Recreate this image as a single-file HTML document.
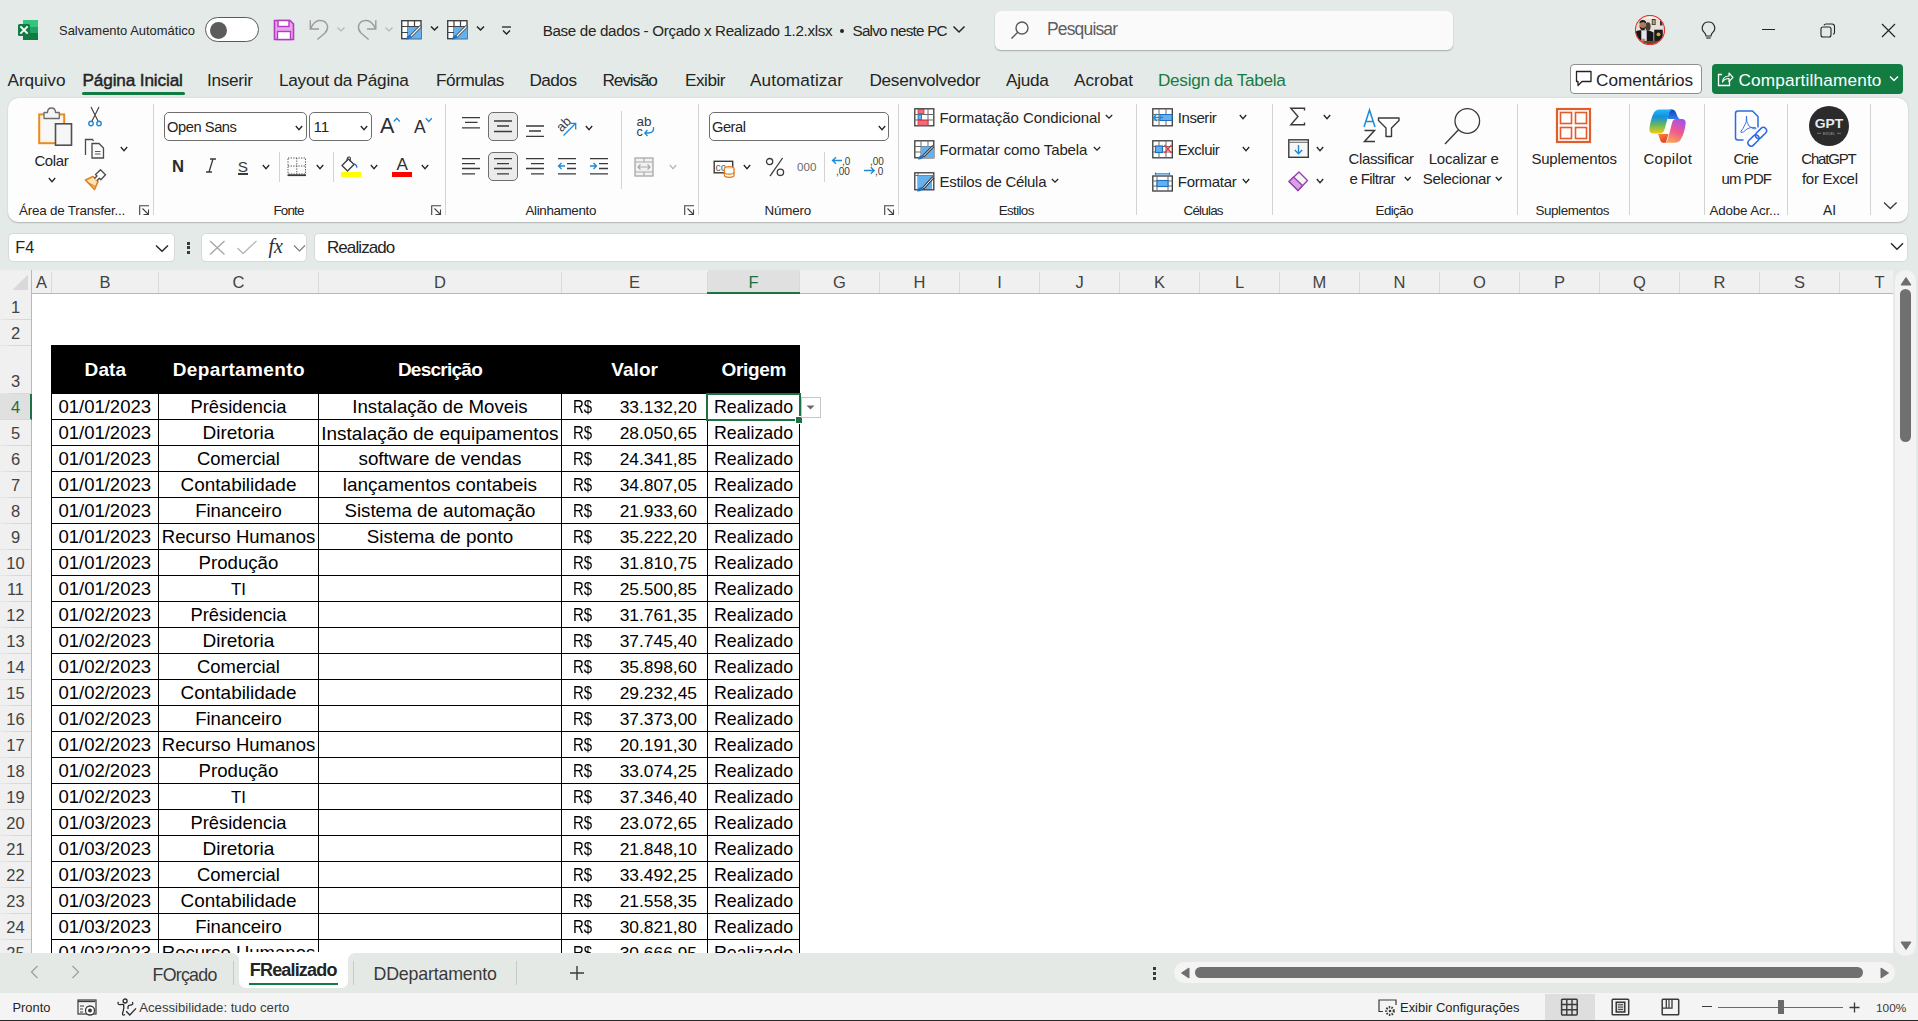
<!DOCTYPE html>
<html><head><meta charset="utf-8">
<style>
html,body{margin:0;padding:0;}
body{width:1918px;height:1021px;overflow:hidden;position:relative;background:#e3eae7;font-family:"Liberation Sans",sans-serif;}
.t{position:absolute;white-space:pre;line-height:1;}
svg{display:block;}
</style></head><body>
<svg style="position:absolute;left:17.00px;top:19.00px;" width="22" height="22" viewBox="0 0 22 22">
<rect x="6" y="1" width="15" height="20" rx="1.5" fill="#21a366"/>
<rect x="6" y="1" width="15" height="7" fill="#33c481" />
<rect x="6" y="14" width="15" height="7" fill="#107c41"/>
<rect x="6" y="8" width="15" height="6" fill="#21a366"/>
<rect x="1" y="5" width="12" height="12" rx="1.5" fill="#107c41"/>
<path d="M4 8 L10 14 M10 8 L4 14" stroke="#fff" stroke-width="1.8" stroke-linecap="square"/>
</svg>
<div class="t" style="left:59.00px;top:25.00px;font-size:12.95px;color:#242424;">Salvamento Automático</div>
<div style="position:absolute;left:205.00px;top:17.00px;width:54.00px;height:25.00px;box-sizing:border-box;border:1.3px solid #5a5a5a;border-radius:13px;background:#fff;"></div>
<div style="position:absolute;left:209.50px;top:21.50px;width:17.00px;height:17.00px;border-radius:50%;background:#5c5c5c;"></div>
<svg style="position:absolute;left:273.00px;top:19.00px;" width="22" height="22" viewBox="0 0 22 22">
<path d="M1.5 1.5 H17 L20.5 5 V20.5 H1.5 Z" fill="#e9a6ee" stroke="#b23bc0" stroke-width="1.6"/>
<rect x="5" y="1.5" width="11" height="6" fill="#fff" stroke="#b23bc0" stroke-width="1.4"/>
<rect x="4.5" y="12.5" width="13" height="8" fill="#fff" stroke="#b23bc0" stroke-width="1.4"/>
</svg>
<svg style="position:absolute;left:290.00px;top:0.00px;" width="110" height="45" viewBox="0 0 110 45"><path d="M20.3 20.3 V29 H29" fill="none" stroke="#9c9c9c" stroke-width="1.4"/><path d="M20.8 28.5 Q24 21 29 20.5 Q36 20 37.5 26 Q38 30 35 33 L27.4 39.5" fill="none" stroke="#9c9c9c" stroke-width="1.4"/><path d="M47.5 27.5 L51 31 L54.5 27.5" fill="none" stroke="#b5b5b5" stroke-width="1.1"/><path d="M85.8 20.3 V29 H77" fill="none" stroke="#9c9c9c" stroke-width="1.4"/><path d="M85.3 28.5 Q82 21 77 20.5 Q70 20 68.5 26 Q68 30 71 33 L78.6 39.5" fill="none" stroke="#9c9c9c" stroke-width="1.4"/><path d="M95.5 27.5 L99 31 L102.5 27.5" fill="none" stroke="#b5b5b5" stroke-width="1.1"/></svg>
<svg style="position:absolute;left:401.00px;top:20.00px;" width="21" height="20" viewBox="0 0 21 20">
<rect x="0.7" y="0.7" width="19.3" height="18" fill="#fff" stroke="#424242" stroke-width="1.4"/>
<path d="M0.7 6.5 H20 M0.7 12.5 H8 M7 0.7 V18.7 M13.5 0.7 V8" stroke="#424242" stroke-width="1.2"/>
<path d="M7 7 H20 V18.7 H7 Z" fill="#64b1f0"/>
<path d="M20 6 L9 17" stroke="#424242" stroke-width="3"/>
<path d="M19.5 6.5 L9.5 16.5" stroke="#fff" stroke-width="1.2"/>
<path d="M5 19.5 Q6 14.5 10 15.5 Q10 19.5 5 19.5Z" fill="#1f6fc6"/>
</svg>
<svg style="position:absolute;left:430.00px;top:25.00px;" width="9" height="7" viewBox="0 0 9 7"><path d="M1 1.5 L4.5 5 L8 1.5" fill="none" stroke="#242424" stroke-width="1.5"/></svg>
<svg style="position:absolute;left:447.00px;top:20.00px;" width="21" height="20" viewBox="0 0 21 20">
<rect x="0.7" y="0.7" width="19.3" height="18" fill="#fff" stroke="#424242" stroke-width="1.4"/>
<path d="M0.7 6.5 H20 M0.7 12.5 H8 M7 0.7 V18.7 M13.5 0.7 V8" stroke="#424242" stroke-width="1.2"/>
<path d="M7 7 H20 V18.7 H7 Z" fill="#64b1f0"/>
<path d="M20 6 L9 17" stroke="#424242" stroke-width="3"/>
<path d="M19.5 6.5 L9.5 16.5" stroke="#fff" stroke-width="1.2"/>
<path d="M5 19.5 Q6 14.5 10 15.5 Q10 19.5 5 19.5Z" fill="#1f6fc6"/>
</svg>
<svg style="position:absolute;left:476.00px;top:25.00px;" width="9" height="7" viewBox="0 0 9 7"><path d="M1 1.5 L4.5 5 L8 1.5" fill="none" stroke="#242424" stroke-width="1.5"/></svg>
<svg style="position:absolute;left:501.00px;top:26.00px;" width="11" height="10" viewBox="0 0 11 10"><path d="M1 1 H10" stroke="#242424" stroke-width="1.3"/><path d="M2 4.5 L5.5 8 L9 4.5" fill="none" stroke="#242424" stroke-width="1.4"/></svg>
<div class="t" style="left:542.70px;top:23.00px;font-size:15.20px;color:#242424;letter-spacing:-0.332px;">Base de dados - Orçado x Realizado 1.2.xlsx</div>
<div style="position:absolute;left:839.70px;top:28.60px;width:4.40px;height:4.40px;border-radius:50%;background:#242424;"></div>
<div class="t" style="left:852.50px;top:23.00px;font-size:15.20px;color:#242424;letter-spacing:-0.746px;">Salvo neste PC</div>
<svg style="position:absolute;left:952.00px;top:25.00px;" width="14" height="9" viewBox="0 0 14 9"><path d="M1.5 1.5 L7 7 L12.5 1.5" fill="none" stroke="#242424" stroke-width="1.5"/></svg>
<div style="position:absolute;left:995.00px;top:11.00px;width:458.00px;height:38.50px;box-sizing:border-box;border-radius:6px;background:#fafafa;box-shadow:0 1px 1.5px rgba(0,0,0,0.28);"></div>
<svg style="position:absolute;left:1010.00px;top:20.00px;" width="20" height="20" viewBox="0 0 20 20"><circle cx="12" cy="8" r="6" fill="none" stroke="#5a5a5a" stroke-width="1.4"/><path d="M7.8 12.2 L1.5 18.5" stroke="#5a5a5a" stroke-width="1.5"/></svg>
<div class="t" style="left:1047.00px;top:21.00px;font-size:17.50px;color:#5e5e5e;letter-spacing:-0.848px;">Pesquisar</div>
<svg style="position:absolute;left:1635.00px;top:15.00px;" width="30" height="30" viewBox="0 0 30 30">
<defs><clipPath id="av"><circle cx="15" cy="15" r="14.3"/></clipPath><filter id="avb"><feGaussianBlur stdDeviation="0.45"/></filter></defs>
<g clip-path="url(#av)"><g filter="url(#avb)">
<rect width="30" height="30" fill="#e6e1d8"/>
<rect x="0" y="0" width="30" height="4" fill="#f4f0ea"/>
<rect x="16.8" y="4" width="3.8" height="6" fill="#2f3442"/><rect x="17.6" y="5" width="2.2" height="4.2" fill="#c8a25a"/>
<rect x="25" y="5.5" width="2.5" height="5" fill="#30333a"/>
<ellipse cx="13" cy="11.5" rx="2.6" ry="4.2" fill="#4a3a32"/>
<path d="M0 17 Q2 15.5 5 15.2 H11.5 Q16 15.5 18.5 17.5 V30 H0Z" fill="#151515"/>
<rect x="6.3" y="15.3" width="5.4" height="11" fill="#e6e3ee"/>
<ellipse cx="7.8" cy="10.6" rx="3.4" ry="4.3" fill="#a97c60"/>
<path d="M4.3 8.5 Q4.5 5 7.8 5 Q11.2 5 11.3 8.5 Q9.5 7 7.8 7 Q6 7 4.3 8.5Z" fill="#1e1612"/>
<path d="M4.6 11 Q5 15.2 7.8 15.3 Q10.6 15.2 11 11 Q10 13 7.8 13 Q5.6 13 4.6 11Z" fill="#2f221c"/>
<rect x="19.2" y="14.7" width="8.6" height="11.6" fill="#1d1d1d"/>
<circle cx="23.5" cy="19.3" r="1.9" fill="#d9a83a"/>
<rect x="0" y="25.9" width="30" height="4.1" fill="#6b4a30"/>
<ellipse cx="8" cy="25" rx="2.3" ry="1.6" fill="#b68866"/>
</g></g>
<circle cx="15" cy="15" r="14.6" fill="none" stroke="#e33333" stroke-width="1.2"/>
</svg>
<svg style="position:absolute;left:1701.00px;top:21.00px;" width="15" height="19" viewBox="0 0 15 19"><path d="M7.5 1 A6 6 0 0 0 3.2 11.4 Q4.8 13 5 15 H10 Q10.2 13 11.8 11.4 A6 6 0 0 0 7.5 1Z" fill="none" stroke="#2a2a2a" stroke-width="1.2"/><path d="M5.3 17 H9.7" stroke="#2a2a2a" stroke-width="1.2"/></svg>
<div style="position:absolute;left:1761.50px;top:28.50px;width:13.00px;height:1.20px;background:#242424;"></div>
<svg style="position:absolute;left:1820.00px;top:23.00px;" width="16" height="15" viewBox="0 0 16 15"><rect x="1" y="4" width="10" height="10" rx="2" fill="none" stroke="#242424" stroke-width="1.1"/><path d="M4 2.3 Q4.5 1 6 1 H12 Q14.5 1 14.5 3.5 V9.5 Q14.5 11 13 11.3" fill="none" stroke="#242424" stroke-width="1.1"/></svg>
<svg style="position:absolute;left:1881.00px;top:23.00px;" width="15" height="15" viewBox="0 0 15 15"><path d="M1 1 L14 14 M14 1 L1 14" stroke="#242424" stroke-width="1.2"/></svg>
<div class="t" style="left:7.50px;top:72.00px;font-size:17.20px;color:#242424;letter-spacing:-0.051px;">Arquivo</div>
<div class="t" style="left:82.50px;top:72.00px;font-size:17.20px;color:#242424;letter-spacing:-0.142px;-webkit-text-stroke:0.45px #242424;">Página Inicial</div>
<div class="t" style="left:207.00px;top:72.00px;font-size:17.20px;color:#242424;letter-spacing:-0.303px;">Inserir</div>
<div class="t" style="left:279.00px;top:72.00px;font-size:17.20px;color:#242424;letter-spacing:-0.266px;">Layout da Página</div>
<div class="t" style="left:436.00px;top:72.00px;font-size:17.20px;color:#242424;letter-spacing:-0.461px;">Fórmulas</div>
<div class="t" style="left:529.50px;top:72.00px;font-size:17.20px;color:#242424;letter-spacing:-0.552px;">Dados</div>
<div class="t" style="left:602.50px;top:72.00px;font-size:17.20px;color:#242424;letter-spacing:-1.113px;">Revisão</div>
<div class="t" style="left:685.00px;top:72.00px;font-size:17.20px;color:#242424;letter-spacing:-0.500px;">Exibir</div>
<div class="t" style="left:750.00px;top:72.00px;font-size:17.20px;color:#242424;letter-spacing:0.124px;">Automatizar</div>
<div class="t" style="left:869.50px;top:72.00px;font-size:17.20px;color:#242424;letter-spacing:-0.310px;">Desenvolvedor</div>
<div class="t" style="left:1006.00px;top:72.00px;font-size:17.20px;color:#242424;letter-spacing:-0.258px;">Ajuda</div>
<div class="t" style="left:1074.00px;top:72.00px;font-size:17.20px;color:#242424;letter-spacing:-0.042px;">Acrobat</div>
<div class="t" style="left:1158.00px;top:72.00px;font-size:17.20px;color:#187a42;letter-spacing:-0.313px;">Design da Tabela</div>
<div style="position:absolute;left:82.00px;top:92.00px;width:103.00px;height:3.00px;background:#107c41;border-radius:1.5px;"></div>
<div style="position:absolute;left:1570.00px;top:64.00px;width:132.00px;height:30.00px;box-sizing:border-box;border:1px solid #8f8f8f;border-radius:4px;background:#fff;"></div>
<svg style="position:absolute;left:1575.00px;top:70.00px;" width="18" height="17" viewBox="0 0 18 17"><path d="M1.5 1.5 H16 V11.5 H7 L3 15.5 V11.5 H1.5Z" fill="none" stroke="#242424" stroke-width="1.3" stroke-linejoin="round"/></svg>
<div class="t" style="left:1596.00px;top:72.00px;font-size:17.20px;color:#242424;letter-spacing:-0.032px;">Comentários</div>
<div style="position:absolute;left:1712.00px;top:64.00px;width:191.00px;height:30.00px;border-radius:4px;background:#137c43;"></div>
<svg style="position:absolute;left:1716.00px;top:70.00px;" width="18" height="17" viewBox="0 0 18 17"><path d="M6 4.5 H2.5 V15.5 H13.5 V11" fill="none" stroke="#fff" stroke-width="1.3"/><path d="M6.5 12 Q7 6 13 6 V3 L17 7.3 L13 11.5 V8.5 Q9 8.3 6.5 12Z" fill="none" stroke="#fff" stroke-width="1.2" stroke-linejoin="round"/></svg>
<div class="t" style="left:1738.40px;top:72.00px;font-size:17.20px;color:#ffffff;letter-spacing:0.172px;">Compartilhamento</div>
<svg style="position:absolute;left:1889.00px;top:75.00px;" width="10" height="8" viewBox="0 0 10 8"><path d="M1 1.5 L5 5.5 L9 1.5" fill="none" stroke="#fff" stroke-width="1.4"/></svg>
<div style="position:absolute;left:8.00px;top:98.00px;width:1900.00px;height:123.70px;border-radius:10px;background:#fdfdfd;box-shadow:0 0.5px 1.5px rgba(0,0,0,0.22);"></div>
<svg style="position:absolute;left:30.00px;top:100.00px;" width="50" height="50" viewBox="0 0 50 50"><rect x="9.2" y="14.4" width="25" height="28.8" fill="#fff3dd" stroke="#ea8a22" stroke-width="2"/><rect x="12" y="17" width="19.5" height="23.5" fill="#f7f7f7"/><path d="M14 18.5 V12.5 H17.5 Q17.5 8 21.5 8 Q25.5 8 25.5 12.5 H29.3 V18.5Z" fill="#f4f4f4" stroke="#6b6b6b" stroke-width="1.3" stroke-linejoin="round"/><rect x="25.5" y="23.8" width="16" height="21.4" fill="#f6f6f6" stroke="#505050" stroke-width="1.6"/></svg>
<div class="t" style="left:34.40px;top:153.00px;font-size:15.00px;color:#242424;letter-spacing:-0.387px;">Colar</div>
<svg style="position:absolute;left:47.50px;top:176.50px;" width="8" height="6.5" viewBox="0 0 8 6.5"><path d="M0.8 1 L4.00 4.70 L7.20 1" fill="none" stroke="#242424" stroke-width="1.30"/></svg>
<svg style="position:absolute;left:87.00px;top:106.00px;" width="16" height="22" viewBox="0 0 16 22"><path d="M4 1 L11 15 M12 1 L5 15" stroke="#3c3c3c" stroke-width="1.1"/><circle cx="4" cy="17.5" r="2.2" fill="none" stroke="#1e8ad6" stroke-width="1.4"/><circle cx="12" cy="17.5" r="2.2" fill="none" stroke="#1e8ad6" stroke-width="1.4"/></svg>
<svg style="position:absolute;left:84.00px;top:138.00px;" width="22" height="22" viewBox="0 0 22 22"><path d="M1.5 17 V1.5 H8.5 L9.5 3" fill="none" stroke="#4a4a4a" stroke-width="1.3"/><path d="M8 5.5 H15 L19.5 10 V20 H8Z" fill="#fafafa" stroke="#4a4a4a" stroke-width="1.3"/><path d="M11 13.5 H16.5 M11 16 H16.5" stroke="#5a5a5a" stroke-width="1"/></svg>
<svg style="position:absolute;left:119.50px;top:146.00px;" width="8" height="6.5" viewBox="0 0 8 6.5"><path d="M0.8 1 L4.00 4.70 L7.20 1" fill="none" stroke="#242424" stroke-width="1.30"/></svg>
<svg style="position:absolute;left:84.00px;top:169.00px;" width="23" height="22" viewBox="0 0 23 22"><path d="M1.5 11 L9 7.5 L14 12.5 L10.5 20.5 Z" fill="#fde3b0" stroke="#e3811c" stroke-width="1.7" stroke-linejoin="round"/><path d="M4.5 14 L11 17.5" stroke="#e3811c" stroke-width="1.2"/><path d="M10.5 9.5 L13 7 L11.5 5.5 L16.5 0.8 L21.5 5.8 L16.8 10.8 L15.3 9.3 L12.8 11.8" fill="#fff" stroke="#4a4a4a" stroke-width="1.3" stroke-linejoin="round"/></svg>
<div class="t" style="left:19.00px;top:204.00px;font-size:13.40px;color:#242424;letter-spacing:-0.212px;">Área de Transfer...</div>
<svg style="position:absolute;left:138.50px;top:204.50px;" width="11" height="11" viewBox="0 0 11 11"><path d="M0.7 10 V0.7 H10" fill="none" stroke="#424242" stroke-width="1.1"/><path d="M3.5 3.5 L9.5 9.5 M9.5 4.5 V9.5 H4.5" fill="none" stroke="#424242" stroke-width="1.1"/></svg>
<div style="position:absolute;left:153.10px;top:104.00px;width:1.00px;height:111.00px;background:#d3d3d3;"></div>
<div style="position:absolute;left:164.30px;top:112.20px;width:142.30px;height:29.30px;box-sizing:border-box;border:1px solid #6e6e6e;border-radius:5px;background:#fff;"></div>
<div class="t" style="left:167.00px;top:120.00px;font-size:14.70px;color:#242424;letter-spacing:-0.447px;">Open Sans</div>
<svg style="position:absolute;left:295.20px;top:124.50px;" width="8" height="6.5" viewBox="0 0 8 6.5"><path d="M0.8 1 L4.00 4.70 L7.20 1" fill="none" stroke="#242424" stroke-width="1.30"/></svg>
<div style="position:absolute;left:309.20px;top:112.20px;width:62.70px;height:29.30px;box-sizing:border-box;border:1px solid #6e6e6e;border-radius:5px;background:#fff;"></div>
<div class="t" style="left:313.40px;top:119.00px;font-size:15.20px;color:#242424;">11</div>
<svg style="position:absolute;left:360.30px;top:124.50px;" width="8" height="6.5" viewBox="0 0 8 6.5"><path d="M0.8 1 L4.00 4.70 L7.20 1" fill="none" stroke="#242424" stroke-width="1.30"/></svg>
<div class="t" style="left:380.00px;top:116.00px;font-size:21.50px;color:#2e2e2e;">A</div>
<svg style="position:absolute;left:393.00px;top:117.00px;" width="8" height="6" viewBox="0 0 8 6"><path d="M0.8 4.5 L3.8 1.3 L6.8 4.5" fill="none" stroke="#1e8ad6" stroke-width="1.3"/></svg>
<div class="t" style="left:414.00px;top:119.00px;font-size:17.50px;color:#2e2e2e;">A</div>
<svg style="position:absolute;left:424.50px;top:117.00px;" width="8" height="6" viewBox="0 0 8 6"><path d="M0.8 1.3 L3.8 4.5 L6.8 1.3" fill="none" stroke="#1e8ad6" stroke-width="1.3"/></svg>
<div class="t" style="left:172.00px;top:159.00px;font-size:16.67px;color:#2a2a2a;font-weight:bold;">N</div>
<svg style="position:absolute;left:205.00px;top:158.00px;" width="12" height="15" viewBox="0 0 12 15"><path d="M5 1 H11 M1 14 H7 M8 1 L4 14" fill="none" stroke="#3a3a3a" stroke-width="1.3"/></svg>
<div class="t" style="left:237.80px;top:159.00px;font-size:15.34px;color:#3a3a3a;">S</div>
<div style="position:absolute;left:237.50px;top:173.30px;width:10.50px;height:1.40px;background:#3a3a3a;"></div>
<svg style="position:absolute;left:262.10px;top:164.00px;" width="8" height="6.5" viewBox="0 0 8 6.5"><path d="M0.8 1 L4.00 4.70 L7.20 1" fill="none" stroke="#242424" stroke-width="1.30"/></svg>
<div style="position:absolute;left:279.00px;top:152.00px;width:1.00px;height:29.50px;background:#d3d3d3;"></div>
<svg style="position:absolute;left:286.50px;top:156.50px;" width="20" height="20" viewBox="0 0 20 20"><path d="M1 1 H18.5 V17 H1Z M9.75 1 V17 M1 9 H18.5" fill="none" stroke="#555" stroke-width="1" stroke-dasharray="1.3 1.3"/><path d="M0.5 18.2 H19" stroke="#3a3a3a" stroke-width="1.8"/></svg>
<svg style="position:absolute;left:316.00px;top:164.00px;" width="8" height="6.5" viewBox="0 0 8 6.5"><path d="M0.8 1 L4.00 4.70 L7.20 1" fill="none" stroke="#242424" stroke-width="1.30"/></svg>
<div style="position:absolute;left:332.90px;top:152.00px;width:1.00px;height:29.50px;background:#d3d3d3;"></div>
<svg style="position:absolute;left:340.00px;top:156.00px;" width="22" height="22" viewBox="0 0 22 22"><path d="M2 9.5 L8.5 3 L14 8.5 L7.5 15Z" fill="#fff" stroke="#3a3a3a" stroke-width="1.3" stroke-linejoin="round"/><path d="M7 4.5 Q7 0.5 9.5 1 Q11 1.5 10 5.5" fill="none" stroke="#3a3a3a" stroke-width="1.1"/><path d="M13.5 7.5 Q17 7 17.5 11.5 L16.5 12 Q16 9 14.5 9Z" fill="#1e6fbf"/><rect x="1" y="16" width="20" height="5" fill="#ffff00"/></svg>
<svg style="position:absolute;left:370.10px;top:164.00px;" width="8" height="6.5" viewBox="0 0 8 6.5"><path d="M0.8 1 L4.00 4.70 L7.20 1" fill="none" stroke="#242424" stroke-width="1.30"/></svg>
<div class="t" style="left:396.50px;top:156.00px;font-size:17.16px;color:#2e2e2e;">A</div>
<div style="position:absolute;left:392.00px;top:172.00px;width:20.00px;height:5.00px;background:#ff0000;"></div>
<svg style="position:absolute;left:421.00px;top:164.00px;" width="8" height="6.5" viewBox="0 0 8 6.5"><path d="M0.8 1 L4.00 4.70 L7.20 1" fill="none" stroke="#242424" stroke-width="1.30"/></svg>
<svg style="position:absolute;left:430.50px;top:204.50px;" width="11" height="11" viewBox="0 0 11 11"><path d="M0.7 10 V0.7 H10" fill="none" stroke="#424242" stroke-width="1.1"/><path d="M3.5 3.5 L9.5 9.5 M9.5 4.5 V9.5 H4.5" fill="none" stroke="#424242" stroke-width="1.1"/></svg>
<div class="t" style="left:273.50px;top:204.00px;font-size:13.40px;color:#242424;letter-spacing:-0.834px;">Fonte</div>
<div style="position:absolute;left:444.90px;top:104.00px;width:1.00px;height:111.00px;background:#d3d3d3;"></div>
<svg style="position:absolute;left:461.00px;top:110.00px;" width="22" height="70" viewBox="0 0 22 70"><path d="M1 7.6 H19 M4 12.4 H16.5 M1 17.8 H19" stroke="#3a3a3a" stroke-width="1.3"/></svg>
<div style="position:absolute;left:488.00px;top:112.20px;width:29.50px;height:29.30px;box-sizing:border-box;border:1px solid #6e6e6e;border-radius:5px;background:#ebebeb;"></div>
<svg style="position:absolute;left:493.00px;top:110.00px;" width="22" height="70" viewBox="0 0 22 70"><path d="M1 11 H19 M4 16 H16 M1 21.5 H19" stroke="#3a3a3a" stroke-width="1.3"/></svg>
<svg style="position:absolute;left:525.00px;top:110.00px;" width="22" height="70" viewBox="0 0 22 70"><path d="M1 16 H19 M4 21 H16 M1 26.4 H19" stroke="#3a3a3a" stroke-width="1.3"/></svg>
<svg style="position:absolute;left:556.00px;top:116.00px;" width="22" height="22" viewBox="0 0 22 22"><text x="0" y="0" transform="translate(5.6,16.4) rotate(-45)" font-family="Liberation Sans" font-size="13.2" fill="#3a3a3a">ab</text><path d="M7.5 19.5 L19.5 7.5 M13.5 7.3 H19.7 V13.5" fill="none" stroke="#1e8ad6" stroke-width="1.3"/></svg>
<svg style="position:absolute;left:584.50px;top:124.50px;" width="8" height="6.5" viewBox="0 0 8 6.5"><path d="M0.8 1 L4.00 4.70 L7.20 1" fill="none" stroke="#242424" stroke-width="1.30"/></svg>
<svg style="position:absolute;left:461.00px;top:110.00px;" width="22" height="70" viewBox="0 0 22 70"><path d="M1 48.6 H19 M1 53.7 H14 M1 58.5 H19 M1 63.9 H14" stroke="#3a3a3a" stroke-width="1.3"/></svg>
<div style="position:absolute;left:488.00px;top:152.30px;width:29.50px;height:29.20px;box-sizing:border-box;border:1px solid #6e6e6e;border-radius:5px;background:#ebebeb;"></div>
<svg style="position:absolute;left:493.00px;top:110.00px;" width="22" height="70" viewBox="0 0 22 70"><path d="M1 48.6 H19 M4 53.7 H16 M1 58.5 H19 M4 63.9 H16" stroke="#3a3a3a" stroke-width="1.3"/></svg>
<svg style="position:absolute;left:525.00px;top:110.00px;" width="22" height="70" viewBox="0 0 22 70"><path d="M1 48.6 H19 M6 53.7 H19 M1 58.5 H19 M6 63.9 H19" stroke="#3a3a3a" stroke-width="1.3"/></svg>
<svg style="position:absolute;left:557.00px;top:110.00px;" width="22" height="70" viewBox="0 0 22 70"><path d="M1 48.6 H19 M10 53.7 H19 M10 58.5 H19 M1 63.9 H19" stroke="#3a3a3a" stroke-width="1.3"/><path d="M8 56 H1.8 M4.5 53 L1.5 56 L4.5 59" fill="none" stroke="#1e8ad6" stroke-width="1.3"/></svg>
<svg style="position:absolute;left:589.00px;top:110.00px;" width="22" height="70" viewBox="0 0 22 70"><path d="M1 48.6 H19 M10 53.7 H19 M10 58.5 H19 M1 63.9 H19" stroke="#3a3a3a" stroke-width="1.3"/><path d="M1 56 H7.5 M4.5 53 L7.5 56 L4.5 59" fill="none" stroke="#1e8ad6" stroke-width="1.3"/></svg>
<div style="position:absolute;left:621.10px;top:111.00px;width:1.00px;height:78.00px;background:#d3d3d3;"></div>
<svg style="position:absolute;left:636.00px;top:116.00px;" width="20" height="22" viewBox="0 0 20 22"><text x="0.6" y="10.3" font-family="Liberation Sans" font-size="12.6" fill="#3a3a3a" textLength="15" lengthAdjust="spacingAndGlyphs">ab</text><text x="0.6" y="19.6" font-family="Liberation Sans" font-size="12.6" fill="#3a3a3a">c</text><path d="M17.5 11 Q18.5 17 12 17 H9 M11.5 14 L8.8 17 L11.5 20" fill="none" stroke="#1e8ad6" stroke-width="1.3"/></svg>
<svg style="position:absolute;left:633.50px;top:156.50px;" width="20" height="20" viewBox="0 0 20 20"><rect x="1" y="1" width="18" height="18" fill="#f2f2f2" stroke="#a8a8a8" stroke-width="1.3"/><path d="M1 5 H19 M1 15 H19 M10 1 V5 M10 15 V19" stroke="#a8a8a8" stroke-width="1.1"/><path d="M4 10 H16 M6.5 7.5 L4 10 L6.5 12.5 M13.5 7.5 L16 10 L13.5 12.5" fill="none" stroke="#a8a8a8" stroke-width="1.1"/></svg>
<svg style="position:absolute;left:669.30px;top:164.00px;" width="8" height="6.5" viewBox="0 0 8 6.5"><path d="M0.8 1 L4.00 4.70 L7.20 1" fill="none" stroke="#b8b8b8" stroke-width="1.30"/></svg>
<svg style="position:absolute;left:683.50px;top:204.50px;" width="11" height="11" viewBox="0 0 11 11"><path d="M0.7 10 V0.7 H10" fill="none" stroke="#424242" stroke-width="1.1"/><path d="M3.5 3.5 L9.5 9.5 M9.5 4.5 V9.5 H4.5" fill="none" stroke="#424242" stroke-width="1.1"/></svg>
<div class="t" style="left:525.50px;top:204.00px;font-size:13.40px;color:#242424;letter-spacing:-0.360px;">Alinhamento</div>
<div style="position:absolute;left:697.90px;top:104.00px;width:1.00px;height:111.00px;background:#d3d3d3;"></div>
<div style="position:absolute;left:709.20px;top:112.20px;width:179.50px;height:29.30px;box-sizing:border-box;border:1px solid #6e6e6e;border-radius:5px;background:#fff;"></div>
<div class="t" style="left:712.00px;top:120.00px;font-size:14.70px;color:#242424;letter-spacing:-0.485px;">Geral</div>
<svg style="position:absolute;left:877.50px;top:124.50px;" width="8" height="6.5" viewBox="0 0 8 6.5"><path d="M0.8 1 L4.00 4.70 L7.20 1" fill="none" stroke="#242424" stroke-width="1.30"/></svg>
<svg style="position:absolute;left:713.00px;top:159.50px;" width="23" height="19" viewBox="0 0 23 19"><rect x="1.2" y="1.3" width="18.5" height="11.5" fill="#fff" stroke="#3a3a3a" stroke-width="1.4"/><text x="2.6" y="10.8" font-family="Liberation Sans" font-size="10.5" fill="#5a5a5a">cc</text><ellipse cx="16.2" cy="8.8" rx="4.8" ry="2.1" fill="#fde3c2" stroke="#e07a1a" stroke-width="1.3"/><path d="M11.4 8.8 V15.2 A4.8 2.1 0 0 0 21 15.2 V8.8" fill="#fff" stroke="#e07a1a" stroke-width="1.3"/><path d="M11.4 12 A4.8 2.1 0 0 0 21 12" fill="none" stroke="#e07a1a" stroke-width="1.2"/></svg>
<svg style="position:absolute;left:743.30px;top:164.00px;" width="8" height="6.5" viewBox="0 0 8 6.5"><path d="M0.8 1 L4.00 4.70 L7.20 1" fill="none" stroke="#242424" stroke-width="1.30"/></svg>
<svg style="position:absolute;left:765.00px;top:157.00px;" width="21" height="21" viewBox="0 0 21 21"><circle cx="4.6" cy="4.6" r="3.1" fill="none" stroke="#3a3a3a" stroke-width="1.3"/><circle cx="15.4" cy="15.3" r="3.2" fill="none" stroke="#3a3a3a" stroke-width="1.3"/><path d="M17.6 1 L5 19.2" stroke="#3a3a3a" stroke-width="1.3"/></svg>
<div class="t" style="left:797.00px;top:161.00px;font-size:11.62px;color:#6a6a6a;">000</div>
<div style="position:absolute;left:824.00px;top:152.00px;width:1.00px;height:29.50px;background:#d3d3d3;"></div>
<svg style="position:absolute;left:831.00px;top:156.00px;" width="22" height="22" viewBox="0 0 22 22"><text x="11" y="8.8" font-family="Liberation Sans" font-size="10" fill="#3a3a3a">,0</text><text x="5" y="19" font-family="Liberation Sans" font-size="10" fill="#3a3a3a">,00</text><path d="M11 4.5 H1.8 M5 1.3 L1.5 4.5 L5 7.7" fill="none" stroke="#1e8ad6" stroke-width="1.3"/></svg>
<svg style="position:absolute;left:863.00px;top:156.00px;" width="22" height="22" viewBox="0 0 22 22"><text x="7" y="8.8" font-family="Liberation Sans" font-size="10" fill="#3a3a3a">,00</text><text x="12" y="19" font-family="Liberation Sans" font-size="10" fill="#3a3a3a">,0</text><path d="M1 14.5 H11 M7.8 11.3 L11.2 14.5 L7.8 17.7" fill="none" stroke="#1e8ad6" stroke-width="1.3"/></svg>
<div class="t" style="left:764.60px;top:204.00px;font-size:13.40px;color:#242424;letter-spacing:-0.187px;">Número</div>
<svg style="position:absolute;left:883.50px;top:204.50px;" width="11" height="11" viewBox="0 0 11 11"><path d="M0.7 10 V0.7 H10" fill="none" stroke="#424242" stroke-width="1.1"/><path d="M3.5 3.5 L9.5 9.5 M9.5 4.5 V9.5 H4.5" fill="none" stroke="#424242" stroke-width="1.1"/></svg>
<div style="position:absolute;left:898.00px;top:104.00px;width:1.00px;height:111.00px;background:#d3d3d3;"></div>
<svg style="position:absolute;left:913.50px;top:107.50px;" width="21" height="19" viewBox="0 0 21 19"><rect x="0.8" y="0.8" width="19" height="17" fill="#fff" stroke="#3a3a3a" stroke-width="1.3"/><path d="M0.8 6.5 H20 M0.8 12 H20 M7 0.8 V18 M14 0.8 V18" stroke="#6a6a6a" stroke-width="1"/><rect x="4" y="1.5" width="6" height="4" fill="#f26b7a" stroke="#d92d3b" stroke-width="0.8"/><rect x="4" y="6.8" width="3.5" height="4.8" fill="#64b1f0" stroke="#1e6fbf" stroke-width="0.8"/><rect x="4" y="12.3" width="10" height="5" fill="#f26b7a" stroke="#d92d3b" stroke-width="0.8"/></svg>
<div class="t" style="left:939.50px;top:110.00px;font-size:15.00px;color:#242424;letter-spacing:-0.071px;">Formatação Condicional</div>
<svg style="position:absolute;left:1105.20px;top:113.70px;" width="8" height="6" viewBox="0 0 8 6"><path d="M0.8 1 L4.00 4.20 L7.20 1" fill="none" stroke="#242424" stroke-width="1.30"/></svg>
<svg style="position:absolute;left:913.50px;top:139.50px;" width="21" height="20" viewBox="0 0 21 20"><rect x="0.8" y="0.8" width="19" height="17" fill="#fff" stroke="#3a3a3a" stroke-width="1.3"/><path d="M0.8 6.5 H20 M7 0.8 V18 M14 0.8 V6.5 M0.8 12 H7" stroke="#6a6a6a" stroke-width="1"/><path d="M7 6.5 H20 V18 H7Z" fill="#64b1f0"/><path d="M19.5 6 L9 16.5" stroke="#3a3a3a" stroke-width="2.8"/><path d="M19 6.5 L9.5 16" stroke="#fff" stroke-width="1"/><path d="M4 19.5 Q5 14.5 9.5 15.3 Q9.5 19.5 4 19.5Z" fill="#1e6fbf"/></svg>
<div class="t" style="left:939.50px;top:142.00px;font-size:15.00px;color:#242424;letter-spacing:-0.097px;">Formatar como Tabela</div>
<svg style="position:absolute;left:1092.50px;top:145.80px;" width="8" height="6" viewBox="0 0 8 6"><path d="M0.8 1 L4.00 4.20 L7.20 1" fill="none" stroke="#242424" stroke-width="1.30"/></svg>
<svg style="position:absolute;left:913.50px;top:171.50px;" width="21" height="20" viewBox="0 0 21 20"><rect x="0.8" y="0.8" width="19" height="17" fill="#fff" stroke="#3a3a3a" stroke-width="1.3"/><path d="M0.8 3.5 H20 M4 0.8 V18" stroke="#6a6a6a" stroke-width="1"/><path d="M4 3.5 H18 V17 H4Z" fill="#64b1f0"/><path d="M19.5 5 L9 16.5" stroke="#3a3a3a" stroke-width="2.8"/><path d="M19 5.5 L9.5 16" stroke="#fff" stroke-width="1"/><path d="M3 19.5 Q4 14.5 9 15.3 Q9 19.5 3 19.5Z" fill="#1e6fbf"/></svg>
<div class="t" style="left:939.50px;top:174.00px;font-size:15.00px;color:#242424;letter-spacing:-0.297px;">Estilos de Célula</div>
<svg style="position:absolute;left:1051.10px;top:178.00px;" width="8" height="6" viewBox="0 0 8 6"><path d="M0.8 1 L4.00 4.20 L7.20 1" fill="none" stroke="#242424" stroke-width="1.30"/></svg>
<div class="t" style="left:998.70px;top:204.00px;font-size:13.40px;color:#242424;letter-spacing:-0.627px;">Estilos</div>
<div style="position:absolute;left:1136.20px;top:104.00px;width:1.00px;height:111.00px;background:#d3d3d3;"></div>
<svg style="position:absolute;left:1151.50px;top:107.50px;" width="21" height="19" viewBox="0 0 21 19"><rect x="0.8" y="0.8" width="19.5" height="17" fill="#fff" stroke="#3a3a3a" stroke-width="1.3"/><path d="M0.8 6.5 H20 M0.8 12 H20 M7 0.8 V18 M14 0.8 V18" stroke="#6a6a6a" stroke-width="1"/><rect x="8" y="6.5" width="12" height="6" fill="#64b1f0" stroke="#1e6fbf" stroke-width="1"/><path d="M11 9.5 H1.5 M5 6 L1.5 9.5 L5 13" fill="none" stroke="#1e8ad6" stroke-width="1.4"/></svg>
<div class="t" style="left:1177.80px;top:110.00px;font-size:15.00px;color:#242424;letter-spacing:-0.450px;">Inserir</div>
<svg style="position:absolute;left:1239.30px;top:114.00px;" width="8" height="6.5" viewBox="0 0 8 6.5"><path d="M0.8 1 L4.00 4.70 L7.20 1" fill="none" stroke="#242424" stroke-width="1.30"/></svg>
<svg style="position:absolute;left:1151.50px;top:139.50px;" width="21" height="20" viewBox="0 0 21 20"><rect x="0.8" y="0.8" width="19.5" height="17" fill="#fff" stroke="#3a3a3a" stroke-width="1.3"/><path d="M0.8 6.5 H20 M0.8 12 H20 M7 0.8 V18 M14 0.8 V18" stroke="#6a6a6a" stroke-width="1"/><rect x="3.5" y="6" width="7" height="6.5" fill="#64b1f0" stroke="#1e6fbf" stroke-width="1.2"/><path d="M12.5 5 L19.5 13 M19.5 5 L12.5 13" stroke="#e8383d" stroke-width="1.4" /><rect x="12" y="4.5" width="0" height="0"/></svg>
<div class="t" style="left:1177.80px;top:142.00px;font-size:15.00px;color:#242424;letter-spacing:-0.500px;">Excluir</div>
<svg style="position:absolute;left:1242.20px;top:146.00px;" width="8" height="6.5" viewBox="0 0 8 6.5"><path d="M0.8 1 L4.00 4.70 L7.20 1" fill="none" stroke="#242424" stroke-width="1.30"/></svg>
<svg style="position:absolute;left:1151.50px;top:170.50px;" width="21" height="21" viewBox="0 0 21 21"><path d="M3.5 1.5 V4 M17.5 1.5 V4 M3.5 2.8 H17.5" stroke="#1e8ad6" stroke-width="1.2"/><rect x="0.8" y="5" width="19.5" height="15" fill="#fff" stroke="#3a3a3a" stroke-width="1.3"/><path d="M0.8 10 H20 M0.8 15 H20 M5 5 V20 M16 5 V20" stroke="#6a6a6a" stroke-width="1"/><rect x="5" y="9.5" width="11" height="6" fill="#64b1f0" stroke="#1e6fbf" stroke-width="1.1"/></svg>
<div class="t" style="left:1177.80px;top:174.00px;font-size:15.00px;color:#242424;letter-spacing:-0.275px;">Formatar</div>
<svg style="position:absolute;left:1241.50px;top:177.50px;" width="8" height="6.5" viewBox="0 0 8 6.5"><path d="M0.8 1 L4.00 4.70 L7.20 1" fill="none" stroke="#242424" stroke-width="1.30"/></svg>
<div class="t" style="left:1183.50px;top:204.00px;font-size:13.40px;color:#242424;letter-spacing:-0.765px;">Células</div>
<div style="position:absolute;left:1272.10px;top:104.00px;width:1.00px;height:111.00px;background:#d3d3d3;"></div>
<svg style="position:absolute;left:1289.00px;top:107.00px;" width="18" height="20" viewBox="0 0 18 20"><path d="M15.5 3.5 V1.3 H1.8 L9 9.5 L1.8 17.8 H15.5 V15.5" fill="none" stroke="#3a3a3a" stroke-width="1.4" stroke-linejoin="miter"/></svg>
<svg style="position:absolute;left:1323.30px;top:114.00px;" width="8" height="6.5" viewBox="0 0 8 6.5"><path d="M0.8 1 L4.00 4.70 L7.20 1" fill="none" stroke="#242424" stroke-width="1.30"/></svg>
<svg style="position:absolute;left:1287.50px;top:139.00px;" width="21" height="20" viewBox="0 0 21 20"><rect x="0.8" y="0.8" width="19.5" height="17.5" fill="#f6f6f6" stroke="#3a3a3a" stroke-width="1.4"/><path d="M0.8 3.3 H20" stroke="#6a6a6a" stroke-width="1"/><path d="M10.5 6 V14.5 M6.8 11 L10.5 14.8 L14.2 11" fill="none" stroke="#1e8ad6" stroke-width="1.4"/></svg>
<svg style="position:absolute;left:1315.50px;top:146.00px;" width="8" height="6.5" viewBox="0 0 8 6.5"><path d="M0.8 1 L4.00 4.70 L7.20 1" fill="none" stroke="#242424" stroke-width="1.30"/></svg>
<svg style="position:absolute;left:1287.50px;top:170.50px;" width="21" height="21" viewBox="0 0 21 21"><path d="M1 10.5 L11 1 L19.5 9.5 L10 19.5Z" fill="#f4f4f4" stroke="#9a3cb8" stroke-width="1.4" stroke-linejoin="round"/><path d="M1 10.5 L5.5 6 L14.5 14.5 L10 19.5Z" fill="#d8a2e0" stroke="#9a3cb8" stroke-width="1.3" stroke-linejoin="round"/></svg>
<svg style="position:absolute;left:1315.50px;top:177.50px;" width="8" height="6.5" viewBox="0 0 8 6.5"><path d="M0.8 1 L4.00 4.70 L7.20 1" fill="none" stroke="#242424" stroke-width="1.30"/></svg>
<svg style="position:absolute;left:1360.00px;top:106.00px;" width="42" height="40" viewBox="0 0 42 40"><path d="M4 21 L9.5 4 L15 21 M5.8 15.5 H13.2" fill="none" stroke="#1e8ad6" stroke-width="1.5"/><path d="M4.5 24.5 H14.5 L4.5 35.5 H15" fill="none" stroke="#3a3a3a" stroke-width="1.5"/><path d="M18.5 12 H39 V14.5 L31.5 22 V30.5 H26 V22 L18.5 14.5Z" fill="#fff" stroke="#3a3a3a" stroke-width="1.4" stroke-linejoin="round"/></svg>
<div class="t" style="left:1348.50px;top:151.00px;font-size:15.00px;color:#242424;letter-spacing:-0.365px;">Classificar</div>
<div class="t" style="left:1349.40px;top:171.00px;font-size:15.00px;color:#242424;letter-spacing:-0.581px;">e Filtrar</div>
<svg style="position:absolute;left:1404.00px;top:175.50px;" width="7.5" height="6" viewBox="0 0 7.5 6"><path d="M0.8 1 L3.75 4.20 L6.70 1" fill="none" stroke="#242424" stroke-width="1.30"/></svg>
<svg style="position:absolute;left:1443.00px;top:106.00px;" width="40" height="40" viewBox="0 0 40 40"><circle cx="24.3" cy="15" r="12.3" fill="none" stroke="#3a3a3a" stroke-width="1.3"/><path d="M15.5 23.8 L2 38" stroke="#3a3a3a" stroke-width="1.4"/></svg>
<div class="t" style="left:1428.70px;top:151.00px;font-size:15.00px;color:#242424;letter-spacing:-0.243px;">Localizar e</div>
<div class="t" style="left:1422.70px;top:171.00px;font-size:15.00px;color:#242424;letter-spacing:-0.286px;">Selecionar</div>
<svg style="position:absolute;left:1495.10px;top:175.50px;" width="7.5" height="6" viewBox="0 0 7.5 6"><path d="M0.8 1 L3.75 4.20 L6.70 1" fill="none" stroke="#242424" stroke-width="1.30"/></svg>
<div class="t" style="left:1375.60px;top:204.00px;font-size:13.40px;color:#242424;letter-spacing:-0.641px;">Edição</div>
<div style="position:absolute;left:1517.00px;top:104.00px;width:1.00px;height:111.00px;background:#d3d3d3;"></div>
<svg style="position:absolute;left:1555.00px;top:107.00px;" width="38" height="38" viewBox="0 0 38 38"><rect x="2" y="2" width="33" height="33" fill="none" stroke="#e35d2a" stroke-width="2.2"/><rect x="5.5" y="5.5" width="11" height="11" fill="none" stroke="#e35d2a" stroke-width="1.6"/><rect x="20.5" y="5.5" width="11" height="11" fill="none" stroke="#e35d2a" stroke-width="1.6"/><rect x="5.5" y="20.5" width="11" height="11" fill="none" stroke="#e35d2a" stroke-width="1.6"/><rect x="20.5" y="20.5" width="11" height="11" fill="none" stroke="#e35d2a" stroke-width="1.6"/></svg>
<div class="t" style="left:1531.40px;top:151.00px;font-size:15.00px;color:#242424;letter-spacing:-0.193px;">Suplementos</div>
<div class="t" style="left:1535.50px;top:204.00px;font-size:13.40px;color:#242424;letter-spacing:-0.409px;">Suplementos</div>
<div style="position:absolute;left:1629.00px;top:104.00px;width:1.00px;height:111.00px;background:#d3d3d3;"></div>
<svg style="position:absolute;left:1647.50px;top:107.50px;" width="39" height="37" viewBox="0 0 39 37">
<defs>
<linearGradient id="cp1" x1="0" y1="0" x2="0" y2="1"><stop offset="0" stop-color="#28b4f8"/><stop offset="0.3" stop-color="#1090e0"/><stop offset="0.65" stop-color="#6ab85a"/><stop offset="1" stop-color="#f5cc10"/></linearGradient>
<linearGradient id="cp2" x1="0.7" y1="0" x2="0.3" y2="1"><stop offset="0" stop-color="#a650ea"/><stop offset="0.5" stop-color="#f05a8c"/><stop offset="1" stop-color="#fba65a"/></linearGradient>
<linearGradient id="cp3" x1="0" y1="0" x2="0" y2="1"><stop offset="0" stop-color="#0c3fc8"/><stop offset="1" stop-color="#2f80e8"/></linearGradient>
<linearGradient id="cp4" x1="0" y1="0" x2="0.5" y2="1"><stop offset="0" stop-color="#ff8a3a"/><stop offset="1" stop-color="#e0402a"/></linearGradient>
</defs>
<path d="M21.5 1.5 H24 Q27 1.5 28.3 5.5 Q29.3 9 31.5 11 H19.5 Z" fill="url(#cp3)"/>
<path d="M4.8 25.5 Q1.2 25 1.4 21 Q2.5 12 5 6.5 Q7 1.5 11.5 1.5 H24.5 Q22 2 20.5 7 L16.5 21.5 Q15.3 25.5 12 25.5 Z" fill="url(#cp1)"/>
<path d="M9.8 26 H20.5 L17.8 34.8 H15 Q12.5 34.5 11.5 30 Q11 27 9.8 26 Z" fill="url(#cp4)"/>
<path d="M27.5 11 H34.5 Q38.2 11.3 37.6 16 Q36.5 25 33 31 Q31 34.8 27 34.8 H16.5 Q18.8 34.5 20 30.5 L24 15 Q25 11 27.5 11 Z" fill="url(#cp2)"/>
</svg>
<div class="t" style="left:1643.50px;top:151.00px;font-size:15.00px;color:#242424;letter-spacing:0.279px;">Copilot</div>
<div style="position:absolute;left:1704.10px;top:104.00px;width:1.00px;height:111.00px;background:#d3d3d3;"></div>
<svg style="position:absolute;left:1734.00px;top:110.00px;" width="34" height="37" viewBox="0 0 34 37"><path d="M9.5 30 H4 Q1.5 30 1.5 27.5 V3.5 Q1.5 1 4 1 H18.5 L24 6.5 V17.5" fill="none" stroke="#2d6ae0" stroke-width="1.5" stroke-linejoin="round"/><path d="M12.5 6 Q13.5 12 9 18.5 Q6 22 7 22.5 Q9 23 13 19 Q17 16.5 21 17.5 Q23 18 21.5 19 Q19 19.5 15 16 Q12 12.5 12.5 6Z" fill="none" stroke="#2d6ae0" stroke-width="0.9" stroke-linejoin="round"/><g transform="rotate(-45 19.5 30.5)"><rect x="13" y="27.3" width="13" height="6.4" rx="3.2" fill="#fff" stroke="#2d6ae0" stroke-width="1.5"/></g><g transform="rotate(-45 27 23)"><rect x="20.5" y="19.8" width="13" height="6.4" rx="3.2" fill="none" stroke="#2d6ae0" stroke-width="1.5"/></g></svg>
<div class="t" style="left:1733.40px;top:151.00px;font-size:15.00px;color:#242424;letter-spacing:-0.708px;">Crie</div>
<div class="t" style="left:1721.60px;top:171.00px;font-size:15.00px;color:#242424;letter-spacing:-0.915px;">um PDF</div>
<div class="t" style="left:1709.50px;top:204.00px;font-size:13.40px;color:#242424;letter-spacing:-0.163px;">Adobe Acr...</div>
<div style="position:absolute;left:1787.10px;top:104.00px;width:1.00px;height:111.00px;background:#d3d3d3;"></div>
<svg style="position:absolute;left:1809.00px;top:106.00px;" width="40" height="40" viewBox="0 0 40 40"><circle cx="20" cy="20" r="20" fill="#2b2b2b"/><text x="20" y="22.2" text-anchor="middle" font-family="Liberation Sans" font-weight="bold" font-size="13.6" fill="#ececec" textLength="28.5" lengthAdjust="spacingAndGlyphs">GPT</text><text x="20" y="28.6" text-anchor="middle" font-family="Liberation Sans" font-size="3.6" fill="#b0b0b0">EXCEL</text><path d="M8 27.3 H12 M28 27.3 H32" stroke="#aaa" stroke-width="0.6"/></svg>
<div class="t" style="left:1801.30px;top:151.00px;font-size:15.00px;color:#242424;letter-spacing:-1.192px;">ChatGPT</div>
<div class="t" style="left:1802.00px;top:171.00px;font-size:15.00px;color:#242424;letter-spacing:-0.294px;">for Excel</div>
<div class="t" style="left:1823.00px;top:204.00px;font-size:13.80px;color:#242424;">AI</div>
<div style="position:absolute;left:1869.90px;top:104.00px;width:1.00px;height:111.00px;background:#d3d3d3;"></div>
<svg style="position:absolute;left:1882.50px;top:201.00px;" width="15" height="9" viewBox="0 0 15 9"><path d="M1 1.5 L7.3 7.5 L13.6 1.5" fill="none" stroke="#3a3a3a" stroke-width="1.3"/></svg>
<div style="position:absolute;left:8.30px;top:232.50px;width:166.70px;height:29.00px;box-sizing:border-box;border:1px solid #d9d9d9;border-radius:5px;background:#fff;"></div>
<div class="t" style="left:15.30px;top:239.00px;font-size:16.20px;color:#242424;">F4</div>
<svg style="position:absolute;left:155.00px;top:244.00px;" width="14" height="9" viewBox="0 0 14 9"><path d="M1 1.5 L7 7.3 L13 1.5" fill="none" stroke="#242424" stroke-width="1.4"/></svg>
<div style="position:absolute;left:186.80px;top:241.50px;width:3.00px;height:3.00px;background:#3a3a3a;"></div>
<div style="position:absolute;left:186.80px;top:246.30px;width:3.00px;height:3.00px;background:#3a3a3a;"></div>
<div style="position:absolute;left:186.80px;top:251.20px;width:3.00px;height:3.00px;background:#3a3a3a;"></div>
<div style="position:absolute;left:201.40px;top:232.50px;width:105.80px;height:29.00px;box-sizing:border-box;border:1px solid #d9d9d9;border-radius:5px;background:#fff;"></div>
<svg style="position:absolute;left:208.50px;top:240.00px;" width="17" height="16" viewBox="0 0 17 16"><path d="M1 1 L15.5 14.5 M15.5 1 L1 14.5" stroke="#a5a5a5" stroke-width="1.3"/></svg>
<svg style="position:absolute;left:236.00px;top:240.00px;" width="22" height="16" viewBox="0 0 22 16"><path d="M1.5 8 L7 13.5 L20.5 1" fill="none" stroke="#b5b5b5" stroke-width="1.3"/></svg>
<div class="t" style="left:268.50px;top:236.00px;font-size:20.00px;color:#2e2e2e;font-family:'Liberation Serif',serif;font-style:italic;">fx</div>
<svg style="position:absolute;left:292.50px;top:244.00px;" width="13" height="9" viewBox="0 0 13 9"><path d="M1 1.5 L6.5 7 L12 1.5" fill="none" stroke="#7a7a7a" stroke-width="1.1"/></svg>
<div style="position:absolute;left:313.60px;top:232.50px;width:1594.20px;height:29.00px;box-sizing:border-box;border:1px solid #d9d9d9;border-radius:5px;background:#fff;"></div>
<div class="t" style="left:326.90px;top:239.00px;font-size:17.00px;color:#242424;letter-spacing:-0.896px;">Realizado</div>
<svg style="position:absolute;left:1889.50px;top:242.00px;" width="14" height="9" viewBox="0 0 14 9"><path d="M1 1.2 L7 7.3 L13 1.2" fill="none" stroke="#242424" stroke-width="1.4"/></svg>
<div style="position:absolute;left:0;top:0;width:1892.5px;height:953px;overflow:hidden;">
<div style="position:absolute;left:0.00px;top:270.00px;width:1892.50px;height:23.50px;background:#f0f0f0;"></div>
<div style="position:absolute;left:0.00px;top:293.50px;width:31.50px;height:660.00px;background:#f0f0f0;"></div>
<div style="position:absolute;left:31.50px;top:293.50px;width:1861.00px;height:660.00px;background:#ffffff;"></div>
<svg style="position:absolute;left:12.00px;top:274.00px;" width="17" height="17" viewBox="0 0 17 17"><path d="M16 0.5 V16 H0.5Z" fill="#d9d9d9"/></svg>
<div style="position:absolute;left:51.00px;top:272.00px;width:1.00px;height:21.00px;background:#dadada;"></div>
<div class="t" style="left:35.97px;top:274.00px;font-size:16.50px;color:#424242;">A</div>
<div style="position:absolute;left:158.00px;top:272.00px;width:1.00px;height:21.00px;background:#dadada;"></div>
<div class="t" style="left:99.51px;top:274.00px;font-size:16.50px;color:#424242;">B</div>
<div style="position:absolute;left:318.00px;top:272.00px;width:1.00px;height:21.00px;background:#dadada;"></div>
<div class="t" style="left:232.56px;top:274.00px;font-size:16.50px;color:#424242;">C</div>
<div style="position:absolute;left:561.00px;top:272.00px;width:1.00px;height:21.00px;background:#dadada;"></div>
<div class="t" style="left:434.06px;top:274.00px;font-size:16.50px;color:#424242;">D</div>
<div style="position:absolute;left:707.00px;top:272.00px;width:1.00px;height:21.00px;background:#dadada;"></div>
<div class="t" style="left:629.01px;top:274.00px;font-size:16.50px;color:#424242;">E</div>
<div style="position:absolute;left:707.50px;top:270.00px;width:92.00px;height:23.50px;background:#e0e0e0;"></div>
<div style="position:absolute;left:799.00px;top:272.00px;width:1.00px;height:21.00px;background:#dadada;"></div>
<div class="t" style="left:748.47px;top:274.00px;font-size:16.50px;color:#1e6e42;">F</div>
<div style="position:absolute;left:879.00px;top:272.00px;width:1.00px;height:21.00px;background:#dadada;"></div>
<div class="t" style="left:833.07px;top:274.00px;font-size:16.50px;color:#424242;">G</div>
<div style="position:absolute;left:959.00px;top:272.00px;width:1.00px;height:21.00px;background:#dadada;"></div>
<div class="t" style="left:913.56px;top:274.00px;font-size:16.50px;color:#424242;">H</div>
<div style="position:absolute;left:1039.00px;top:272.00px;width:1.00px;height:21.00px;background:#dadada;"></div>
<div class="t" style="left:997.19px;top:274.00px;font-size:16.50px;color:#424242;">I</div>
<div style="position:absolute;left:1119.00px;top:272.00px;width:1.00px;height:21.00px;background:#dadada;"></div>
<div class="t" style="left:1075.38px;top:274.00px;font-size:16.50px;color:#424242;">J</div>
<div style="position:absolute;left:1199.00px;top:272.00px;width:1.00px;height:21.00px;background:#dadada;"></div>
<div class="t" style="left:1154.01px;top:274.00px;font-size:16.50px;color:#424242;">K</div>
<div style="position:absolute;left:1279.00px;top:272.00px;width:1.00px;height:21.00px;background:#dadada;"></div>
<div class="t" style="left:1234.92px;top:274.00px;font-size:16.50px;color:#424242;">L</div>
<div style="position:absolute;left:1359.00px;top:272.00px;width:1.00px;height:21.00px;background:#dadada;"></div>
<div class="t" style="left:1312.61px;top:274.00px;font-size:16.50px;color:#424242;">M</div>
<div style="position:absolute;left:1439.00px;top:272.00px;width:1.00px;height:21.00px;background:#dadada;"></div>
<div class="t" style="left:1393.56px;top:274.00px;font-size:16.50px;color:#424242;">N</div>
<div style="position:absolute;left:1519.00px;top:272.00px;width:1.00px;height:21.00px;background:#dadada;"></div>
<div class="t" style="left:1473.07px;top:274.00px;font-size:16.50px;color:#424242;">O</div>
<div style="position:absolute;left:1599.00px;top:272.00px;width:1.00px;height:21.00px;background:#dadada;"></div>
<div class="t" style="left:1554.01px;top:274.00px;font-size:16.50px;color:#424242;">P</div>
<div style="position:absolute;left:1679.00px;top:272.00px;width:1.00px;height:21.00px;background:#dadada;"></div>
<div class="t" style="left:1633.07px;top:274.00px;font-size:16.50px;color:#424242;">Q</div>
<div style="position:absolute;left:1759.00px;top:272.00px;width:1.00px;height:21.00px;background:#dadada;"></div>
<div class="t" style="left:1713.56px;top:274.00px;font-size:16.50px;color:#424242;">R</div>
<div style="position:absolute;left:1839.00px;top:272.00px;width:1.00px;height:21.00px;background:#dadada;"></div>
<div class="t" style="left:1794.01px;top:274.00px;font-size:16.50px;color:#424242;">S</div>
<div style="position:absolute;left:1919.00px;top:272.00px;width:1.00px;height:21.00px;background:#dadada;"></div>
<div class="t" style="left:1874.47px;top:274.00px;font-size:16.50px;color:#424242;">T</div>
<div style="position:absolute;left:31.00px;top:292.50px;width:1861.50px;height:1.00px;background:#b8b8b8;"></div>
<div style="position:absolute;left:707.00px;top:291.50px;width:93.00px;height:2.50px;background:#1e7145;"></div>
<div style="position:absolute;left:31.00px;top:270.00px;width:1.00px;height:683.00px;background:#b8b8b8;"></div>
<div style="position:absolute;left:0.00px;top:319.00px;width:31.00px;height:1.00px;background:linear-gradient(90deg,rgba(216,216,216,0.3),#d8d8d8 50%);"></div>
<div class="t" style="left:10.92px;top:299.00px;font-size:16.50px;color:#424242;">1</div>
<div style="position:absolute;left:0.00px;top:345.00px;width:31.00px;height:1.00px;background:linear-gradient(90deg,rgba(216,216,216,0.3),#d8d8d8 50%);"></div>
<div class="t" style="left:10.92px;top:325.00px;font-size:16.50px;color:#424242;">2</div>
<div style="position:absolute;left:0.00px;top:393.00px;width:31.00px;height:1.00px;background:linear-gradient(90deg,rgba(216,216,216,0.3),#d8d8d8 50%);"></div>
<div class="t" style="left:10.92px;top:373.00px;font-size:16.50px;color:#424242;">3</div>
<div style="position:absolute;left:0.00px;top:393.50px;width:31.00px;height:26.00px;background:#e0e0e0;"></div>
<div style="position:absolute;left:29.50px;top:393.50px;width:2.50px;height:26.00px;background:#1e7145;"></div>
<div style="position:absolute;left:0.00px;top:419.00px;width:31.00px;height:1.00px;background:linear-gradient(90deg,rgba(216,216,216,0.3),#d8d8d8 50%);"></div>
<div class="t" style="left:10.92px;top:399.00px;font-size:16.50px;color:#1e6e42;">4</div>
<div style="position:absolute;left:0.00px;top:445.00px;width:31.00px;height:1.00px;background:linear-gradient(90deg,rgba(216,216,216,0.3),#d8d8d8 50%);"></div>
<div class="t" style="left:10.92px;top:425.00px;font-size:16.50px;color:#424242;">5</div>
<div style="position:absolute;left:0.00px;top:471.00px;width:31.00px;height:1.00px;background:linear-gradient(90deg,rgba(216,216,216,0.3),#d8d8d8 50%);"></div>
<div class="t" style="left:10.92px;top:451.00px;font-size:16.50px;color:#424242;">6</div>
<div style="position:absolute;left:0.00px;top:497.00px;width:31.00px;height:1.00px;background:linear-gradient(90deg,rgba(216,216,216,0.3),#d8d8d8 50%);"></div>
<div class="t" style="left:10.92px;top:477.00px;font-size:16.50px;color:#424242;">7</div>
<div style="position:absolute;left:0.00px;top:523.00px;width:31.00px;height:1.00px;background:linear-gradient(90deg,rgba(216,216,216,0.3),#d8d8d8 50%);"></div>
<div class="t" style="left:10.92px;top:503.00px;font-size:16.50px;color:#424242;">8</div>
<div style="position:absolute;left:0.00px;top:549.00px;width:31.00px;height:1.00px;background:linear-gradient(90deg,rgba(216,216,216,0.3),#d8d8d8 50%);"></div>
<div class="t" style="left:10.92px;top:529.00px;font-size:16.50px;color:#424242;">9</div>
<div style="position:absolute;left:0.00px;top:575.00px;width:31.00px;height:1.00px;background:linear-gradient(90deg,rgba(216,216,216,0.3),#d8d8d8 50%);"></div>
<div class="t" style="left:6.34px;top:555.00px;font-size:16.50px;color:#424242;">10</div>
<div style="position:absolute;left:0.00px;top:601.00px;width:31.00px;height:1.00px;background:linear-gradient(90deg,rgba(216,216,216,0.3),#d8d8d8 50%);"></div>
<div class="t" style="left:6.92px;top:581.00px;font-size:16.50px;color:#424242;">11</div>
<div style="position:absolute;left:0.00px;top:627.00px;width:31.00px;height:1.00px;background:linear-gradient(90deg,rgba(216,216,216,0.3),#d8d8d8 50%);"></div>
<div class="t" style="left:6.34px;top:607.00px;font-size:16.50px;color:#424242;">12</div>
<div style="position:absolute;left:0.00px;top:653.00px;width:31.00px;height:1.00px;background:linear-gradient(90deg,rgba(216,216,216,0.3),#d8d8d8 50%);"></div>
<div class="t" style="left:6.34px;top:633.00px;font-size:16.50px;color:#424242;">13</div>
<div style="position:absolute;left:0.00px;top:679.00px;width:31.00px;height:1.00px;background:linear-gradient(90deg,rgba(216,216,216,0.3),#d8d8d8 50%);"></div>
<div class="t" style="left:6.34px;top:659.00px;font-size:16.50px;color:#424242;">14</div>
<div style="position:absolute;left:0.00px;top:705.00px;width:31.00px;height:1.00px;background:linear-gradient(90deg,rgba(216,216,216,0.3),#d8d8d8 50%);"></div>
<div class="t" style="left:6.34px;top:685.00px;font-size:16.50px;color:#424242;">15</div>
<div style="position:absolute;left:0.00px;top:731.00px;width:31.00px;height:1.00px;background:linear-gradient(90deg,rgba(216,216,216,0.3),#d8d8d8 50%);"></div>
<div class="t" style="left:6.34px;top:711.00px;font-size:16.50px;color:#424242;">16</div>
<div style="position:absolute;left:0.00px;top:757.00px;width:31.00px;height:1.00px;background:linear-gradient(90deg,rgba(216,216,216,0.3),#d8d8d8 50%);"></div>
<div class="t" style="left:6.34px;top:737.00px;font-size:16.50px;color:#424242;">17</div>
<div style="position:absolute;left:0.00px;top:783.00px;width:31.00px;height:1.00px;background:linear-gradient(90deg,rgba(216,216,216,0.3),#d8d8d8 50%);"></div>
<div class="t" style="left:6.34px;top:763.00px;font-size:16.50px;color:#424242;">18</div>
<div style="position:absolute;left:0.00px;top:809.00px;width:31.00px;height:1.00px;background:linear-gradient(90deg,rgba(216,216,216,0.3),#d8d8d8 50%);"></div>
<div class="t" style="left:6.34px;top:789.00px;font-size:16.50px;color:#424242;">19</div>
<div style="position:absolute;left:0.00px;top:835.00px;width:31.00px;height:1.00px;background:linear-gradient(90deg,rgba(216,216,216,0.3),#d8d8d8 50%);"></div>
<div class="t" style="left:6.34px;top:815.00px;font-size:16.50px;color:#424242;">20</div>
<div style="position:absolute;left:0.00px;top:861.00px;width:31.00px;height:1.00px;background:linear-gradient(90deg,rgba(216,216,216,0.3),#d8d8d8 50%);"></div>
<div class="t" style="left:6.34px;top:841.00px;font-size:16.50px;color:#424242;">21</div>
<div style="position:absolute;left:0.00px;top:887.00px;width:31.00px;height:1.00px;background:linear-gradient(90deg,rgba(216,216,216,0.3),#d8d8d8 50%);"></div>
<div class="t" style="left:6.34px;top:867.00px;font-size:16.50px;color:#424242;">22</div>
<div style="position:absolute;left:0.00px;top:913.00px;width:31.00px;height:1.00px;background:linear-gradient(90deg,rgba(216,216,216,0.3),#d8d8d8 50%);"></div>
<div class="t" style="left:6.34px;top:893.00px;font-size:16.50px;color:#424242;">23</div>
<div style="position:absolute;left:0.00px;top:939.00px;width:31.00px;height:1.00px;background:linear-gradient(90deg,rgba(216,216,216,0.3),#d8d8d8 50%);"></div>
<div class="t" style="left:6.34px;top:919.00px;font-size:16.50px;color:#424242;">24</div>
<div class="t" style="left:6.34px;top:945.00px;font-size:16.50px;color:#424242;">25</div>
<div style="position:absolute;left:51.00px;top:345.00px;width:749.00px;height:48.50px;background:#000;"></div>
<div class="t" style="left:84.60px;top:360.00px;font-size:19.00px;color:#ffffff;font-weight:bold;letter-spacing:0.092px;">Data</div>
<div class="t" style="left:172.70px;top:360.00px;font-size:19.00px;color:#ffffff;font-weight:bold;letter-spacing:0.375px;">Departamento</div>
<div class="t" style="left:397.90px;top:360.00px;font-size:19.00px;color:#ffffff;font-weight:bold;letter-spacing:-0.740px;">Descrição</div>
<div class="t" style="left:611.20px;top:360.00px;font-size:19.00px;color:#ffffff;font-weight:bold;letter-spacing:0.086px;">Valor</div>
<div class="t" style="left:721.40px;top:360.00px;font-size:19.00px;color:#ffffff;font-weight:bold;letter-spacing:-0.280px;">Origem</div>
<div class="t" style="left:58.40px;top:398.00px;font-size:18.52px;color:#000;">01/01/2023</div>
<div class="t" style="left:190.50px;top:398.00px;font-size:18.36px;color:#000;">Prêsidencia</div>
<div class="t" style="left:352.25px;top:398.00px;font-size:18.68px;color:#000;">Instalação de Moveis</div>
<div class="t" style="left:572.80px;top:399.00px;font-size:17.60px;color:#000;transform:scaleX(0.8523);transform-origin:0 0;">R$</div>
<div class="t" style="left:619.70px;top:399.00px;font-size:17.39px;color:#000;">33.132,20</div>
<div class="t" style="left:713.95px;top:399.00px;font-size:17.80px;color:#000;">Realizado</div>
<div style="position:absolute;left:51.00px;top:419.00px;width:749.00px;height:1.20px;background:#000;"></div>
<div class="t" style="left:58.40px;top:424.00px;font-size:18.52px;color:#000;">01/01/2023</div>
<div class="t" style="left:202.45px;top:423.00px;font-size:19.05px;color:#000;">Diretoria</div>
<div class="t" style="left:321.30px;top:424.00px;font-size:18.98px;color:#000;">Instalação de equipamentos</div>
<div class="t" style="left:572.80px;top:425.00px;font-size:17.60px;color:#000;transform:scaleX(0.8523);transform-origin:0 0;">R$</div>
<div class="t" style="left:619.70px;top:425.00px;font-size:17.39px;color:#000;">28.050,65</div>
<div class="t" style="left:713.95px;top:425.00px;font-size:17.80px;color:#000;">Realizado</div>
<div style="position:absolute;left:51.00px;top:445.00px;width:749.00px;height:1.20px;background:#000;"></div>
<div class="t" style="left:58.40px;top:450.00px;font-size:18.52px;color:#000;">01/01/2023</div>
<div class="t" style="left:197.05px;top:450.00px;font-size:18.42px;color:#000;">Comercial</div>
<div class="t" style="left:358.50px;top:450.00px;font-size:18.80px;color:#000;">software de vendas</div>
<div class="t" style="left:572.80px;top:451.00px;font-size:17.60px;color:#000;transform:scaleX(0.8523);transform-origin:0 0;">R$</div>
<div class="t" style="left:619.70px;top:451.00px;font-size:17.39px;color:#000;">24.341,85</div>
<div class="t" style="left:713.95px;top:451.00px;font-size:17.80px;color:#000;">Realizado</div>
<div style="position:absolute;left:51.00px;top:471.00px;width:749.00px;height:1.20px;background:#000;"></div>
<div class="t" style="left:58.40px;top:476.00px;font-size:18.52px;color:#000;">01/01/2023</div>
<div class="t" style="left:180.60px;top:476.00px;font-size:18.94px;color:#000;">Contabilidade</div>
<div class="t" style="left:342.75px;top:475.00px;font-size:19.01px;color:#000;">lançamentos contabeis</div>
<div class="t" style="left:572.80px;top:477.00px;font-size:17.60px;color:#000;transform:scaleX(0.8523);transform-origin:0 0;">R$</div>
<div class="t" style="left:619.70px;top:477.00px;font-size:17.39px;color:#000;">34.807,05</div>
<div class="t" style="left:713.95px;top:477.00px;font-size:17.80px;color:#000;">Realizado</div>
<div style="position:absolute;left:51.00px;top:497.00px;width:749.00px;height:1.20px;background:#000;"></div>
<div class="t" style="left:58.40px;top:502.00px;font-size:18.52px;color:#000;">01/01/2023</div>
<div class="t" style="left:195.20px;top:502.00px;font-size:18.54px;color:#000;">Financeiro</div>
<div class="t" style="left:344.45px;top:502.00px;font-size:18.68px;color:#000;">Sistema de automação</div>
<div class="t" style="left:572.80px;top:503.00px;font-size:17.60px;color:#000;transform:scaleX(0.8523);transform-origin:0 0;">R$</div>
<div class="t" style="left:619.70px;top:503.00px;font-size:17.39px;color:#000;">21.933,60</div>
<div class="t" style="left:713.95px;top:503.00px;font-size:17.80px;color:#000;">Realizado</div>
<div style="position:absolute;left:51.00px;top:523.00px;width:749.00px;height:1.20px;background:#000;"></div>
<div class="t" style="left:58.40px;top:528.00px;font-size:18.52px;color:#000;">01/01/2023</div>
<div class="t" style="left:161.75px;top:528.00px;font-size:18.54px;color:#000;">Recurso Humanos</div>
<div class="t" style="left:366.80px;top:528.00px;font-size:18.81px;color:#000;">Sistema de ponto</div>
<div class="t" style="left:572.80px;top:529.00px;font-size:17.60px;color:#000;transform:scaleX(0.8523);transform-origin:0 0;">R$</div>
<div class="t" style="left:619.70px;top:529.00px;font-size:17.39px;color:#000;">35.222,20</div>
<div class="t" style="left:713.95px;top:529.00px;font-size:17.80px;color:#000;">Realizado</div>
<div style="position:absolute;left:51.00px;top:549.00px;width:749.00px;height:1.20px;background:#000;"></div>
<div class="t" style="left:58.40px;top:554.00px;font-size:18.52px;color:#000;">01/01/2023</div>
<div class="t" style="left:198.60px;top:554.00px;font-size:18.64px;color:#000;">Produção</div>
<div class="t" style="left:572.80px;top:555.00px;font-size:17.60px;color:#000;transform:scaleX(0.8523);transform-origin:0 0;">R$</div>
<div class="t" style="left:619.70px;top:555.00px;font-size:17.39px;color:#000;">31.810,75</div>
<div class="t" style="left:713.95px;top:555.00px;font-size:17.80px;color:#000;">Realizado</div>
<div style="position:absolute;left:51.00px;top:575.00px;width:749.00px;height:1.20px;background:#000;"></div>
<div class="t" style="left:58.40px;top:580.00px;font-size:18.52px;color:#000;">01/01/2023</div>
<div class="t" style="left:231.00px;top:582.00px;font-size:16.85px;color:#000;">TI</div>
<div class="t" style="left:572.80px;top:581.00px;font-size:17.60px;color:#000;transform:scaleX(0.8523);transform-origin:0 0;">R$</div>
<div class="t" style="left:619.70px;top:581.00px;font-size:17.39px;color:#000;">25.500,85</div>
<div class="t" style="left:713.95px;top:581.00px;font-size:17.80px;color:#000;">Realizado</div>
<div style="position:absolute;left:51.00px;top:601.00px;width:749.00px;height:1.20px;background:#000;"></div>
<div class="t" style="left:58.40px;top:606.00px;font-size:18.52px;color:#000;">01/02/2023</div>
<div class="t" style="left:190.50px;top:606.00px;font-size:18.36px;color:#000;">Prêsidencia</div>
<div class="t" style="left:572.80px;top:607.00px;font-size:17.60px;color:#000;transform:scaleX(0.8523);transform-origin:0 0;">R$</div>
<div class="t" style="left:619.70px;top:607.00px;font-size:17.39px;color:#000;">31.761,35</div>
<div class="t" style="left:713.95px;top:607.00px;font-size:17.80px;color:#000;">Realizado</div>
<div style="position:absolute;left:51.00px;top:627.00px;width:749.00px;height:1.20px;background:#000;"></div>
<div class="t" style="left:58.40px;top:632.00px;font-size:18.52px;color:#000;">01/02/2023</div>
<div class="t" style="left:202.45px;top:631.00px;font-size:19.05px;color:#000;">Diretoria</div>
<div class="t" style="left:572.80px;top:633.00px;font-size:17.60px;color:#000;transform:scaleX(0.8523);transform-origin:0 0;">R$</div>
<div class="t" style="left:619.70px;top:633.00px;font-size:17.39px;color:#000;">37.745,40</div>
<div class="t" style="left:713.95px;top:633.00px;font-size:17.80px;color:#000;">Realizado</div>
<div style="position:absolute;left:51.00px;top:653.00px;width:749.00px;height:1.20px;background:#000;"></div>
<div class="t" style="left:58.40px;top:658.00px;font-size:18.52px;color:#000;">01/02/2023</div>
<div class="t" style="left:197.05px;top:658.00px;font-size:18.42px;color:#000;">Comercial</div>
<div class="t" style="left:572.80px;top:659.00px;font-size:17.60px;color:#000;transform:scaleX(0.8523);transform-origin:0 0;">R$</div>
<div class="t" style="left:619.70px;top:659.00px;font-size:17.39px;color:#000;">35.898,60</div>
<div class="t" style="left:713.95px;top:659.00px;font-size:17.80px;color:#000;">Realizado</div>
<div style="position:absolute;left:51.00px;top:679.00px;width:749.00px;height:1.20px;background:#000;"></div>
<div class="t" style="left:58.40px;top:684.00px;font-size:18.52px;color:#000;">01/02/2023</div>
<div class="t" style="left:180.60px;top:684.00px;font-size:18.94px;color:#000;">Contabilidade</div>
<div class="t" style="left:572.80px;top:685.00px;font-size:17.60px;color:#000;transform:scaleX(0.8523);transform-origin:0 0;">R$</div>
<div class="t" style="left:619.70px;top:685.00px;font-size:17.39px;color:#000;">29.232,45</div>
<div class="t" style="left:713.95px;top:685.00px;font-size:17.80px;color:#000;">Realizado</div>
<div style="position:absolute;left:51.00px;top:705.00px;width:749.00px;height:1.20px;background:#000;"></div>
<div class="t" style="left:58.40px;top:710.00px;font-size:18.52px;color:#000;">01/02/2023</div>
<div class="t" style="left:195.20px;top:710.00px;font-size:18.54px;color:#000;">Financeiro</div>
<div class="t" style="left:572.80px;top:711.00px;font-size:17.60px;color:#000;transform:scaleX(0.8523);transform-origin:0 0;">R$</div>
<div class="t" style="left:619.70px;top:711.00px;font-size:17.39px;color:#000;">37.373,00</div>
<div class="t" style="left:713.95px;top:711.00px;font-size:17.80px;color:#000;">Realizado</div>
<div style="position:absolute;left:51.00px;top:731.00px;width:749.00px;height:1.20px;background:#000;"></div>
<div class="t" style="left:58.40px;top:736.00px;font-size:18.52px;color:#000;">01/02/2023</div>
<div class="t" style="left:161.75px;top:736.00px;font-size:18.54px;color:#000;">Recurso Humanos</div>
<div class="t" style="left:572.80px;top:737.00px;font-size:17.60px;color:#000;transform:scaleX(0.8523);transform-origin:0 0;">R$</div>
<div class="t" style="left:619.70px;top:737.00px;font-size:17.39px;color:#000;">20.191,30</div>
<div class="t" style="left:713.95px;top:737.00px;font-size:17.80px;color:#000;">Realizado</div>
<div style="position:absolute;left:51.00px;top:757.00px;width:749.00px;height:1.20px;background:#000;"></div>
<div class="t" style="left:58.40px;top:762.00px;font-size:18.52px;color:#000;">01/02/2023</div>
<div class="t" style="left:198.60px;top:762.00px;font-size:18.64px;color:#000;">Produção</div>
<div class="t" style="left:572.80px;top:763.00px;font-size:17.60px;color:#000;transform:scaleX(0.8523);transform-origin:0 0;">R$</div>
<div class="t" style="left:619.70px;top:763.00px;font-size:17.39px;color:#000;">33.074,25</div>
<div class="t" style="left:713.95px;top:763.00px;font-size:17.80px;color:#000;">Realizado</div>
<div style="position:absolute;left:51.00px;top:783.00px;width:749.00px;height:1.20px;background:#000;"></div>
<div class="t" style="left:58.40px;top:788.00px;font-size:18.52px;color:#000;">01/02/2023</div>
<div class="t" style="left:231.00px;top:790.00px;font-size:16.85px;color:#000;">TI</div>
<div class="t" style="left:572.80px;top:789.00px;font-size:17.60px;color:#000;transform:scaleX(0.8523);transform-origin:0 0;">R$</div>
<div class="t" style="left:619.70px;top:789.00px;font-size:17.39px;color:#000;">37.346,40</div>
<div class="t" style="left:713.95px;top:789.00px;font-size:17.80px;color:#000;">Realizado</div>
<div style="position:absolute;left:51.00px;top:809.00px;width:749.00px;height:1.20px;background:#000;"></div>
<div class="t" style="left:58.40px;top:814.00px;font-size:18.52px;color:#000;">01/03/2023</div>
<div class="t" style="left:190.50px;top:814.00px;font-size:18.36px;color:#000;">Prêsidencia</div>
<div class="t" style="left:572.80px;top:815.00px;font-size:17.60px;color:#000;transform:scaleX(0.8523);transform-origin:0 0;">R$</div>
<div class="t" style="left:619.70px;top:815.00px;font-size:17.39px;color:#000;">23.072,65</div>
<div class="t" style="left:713.95px;top:815.00px;font-size:17.80px;color:#000;">Realizado</div>
<div style="position:absolute;left:51.00px;top:835.00px;width:749.00px;height:1.20px;background:#000;"></div>
<div class="t" style="left:58.40px;top:840.00px;font-size:18.52px;color:#000;">01/03/2023</div>
<div class="t" style="left:202.45px;top:839.00px;font-size:19.05px;color:#000;">Diretoria</div>
<div class="t" style="left:572.80px;top:841.00px;font-size:17.60px;color:#000;transform:scaleX(0.8523);transform-origin:0 0;">R$</div>
<div class="t" style="left:619.70px;top:841.00px;font-size:17.39px;color:#000;">21.848,10</div>
<div class="t" style="left:713.95px;top:841.00px;font-size:17.80px;color:#000;">Realizado</div>
<div style="position:absolute;left:51.00px;top:861.00px;width:749.00px;height:1.20px;background:#000;"></div>
<div class="t" style="left:58.40px;top:866.00px;font-size:18.52px;color:#000;">01/03/2023</div>
<div class="t" style="left:197.05px;top:866.00px;font-size:18.42px;color:#000;">Comercial</div>
<div class="t" style="left:572.80px;top:867.00px;font-size:17.60px;color:#000;transform:scaleX(0.8523);transform-origin:0 0;">R$</div>
<div class="t" style="left:619.70px;top:867.00px;font-size:17.39px;color:#000;">33.492,25</div>
<div class="t" style="left:713.95px;top:867.00px;font-size:17.80px;color:#000;">Realizado</div>
<div style="position:absolute;left:51.00px;top:887.00px;width:749.00px;height:1.20px;background:#000;"></div>
<div class="t" style="left:58.40px;top:892.00px;font-size:18.52px;color:#000;">01/03/2023</div>
<div class="t" style="left:180.60px;top:892.00px;font-size:18.94px;color:#000;">Contabilidade</div>
<div class="t" style="left:572.80px;top:893.00px;font-size:17.60px;color:#000;transform:scaleX(0.8523);transform-origin:0 0;">R$</div>
<div class="t" style="left:619.70px;top:893.00px;font-size:17.39px;color:#000;">21.558,35</div>
<div class="t" style="left:713.95px;top:893.00px;font-size:17.80px;color:#000;">Realizado</div>
<div style="position:absolute;left:51.00px;top:913.00px;width:749.00px;height:1.20px;background:#000;"></div>
<div class="t" style="left:58.40px;top:918.00px;font-size:18.52px;color:#000;">01/03/2023</div>
<div class="t" style="left:195.20px;top:918.00px;font-size:18.54px;color:#000;">Financeiro</div>
<div class="t" style="left:572.80px;top:919.00px;font-size:17.60px;color:#000;transform:scaleX(0.8523);transform-origin:0 0;">R$</div>
<div class="t" style="left:619.70px;top:919.00px;font-size:17.39px;color:#000;">30.821,80</div>
<div class="t" style="left:713.95px;top:919.00px;font-size:17.80px;color:#000;">Realizado</div>
<div style="position:absolute;left:51.00px;top:939.00px;width:749.00px;height:1.20px;background:#000;"></div>
<div class="t" style="left:58.40px;top:944.00px;font-size:18.52px;color:#000;">01/03/2023</div>
<div class="t" style="left:161.75px;top:944.00px;font-size:18.54px;color:#000;">Recurso Humanos</div>
<div class="t" style="left:572.80px;top:945.00px;font-size:17.60px;color:#000;transform:scaleX(0.8523);transform-origin:0 0;">R$</div>
<div class="t" style="left:619.70px;top:945.00px;font-size:17.39px;color:#000;">30.666,95</div>
<div class="t" style="left:713.95px;top:945.00px;font-size:17.80px;color:#000;">Realizado</div>
<div style="position:absolute;left:51.00px;top:965.00px;width:749.00px;height:1.20px;background:#000;"></div>
<div style="position:absolute;left:51.00px;top:393.00px;width:1.15px;height:572.50px;background:#000;"></div>
<div style="position:absolute;left:158.00px;top:393.00px;width:1.15px;height:572.50px;background:#000;"></div>
<div style="position:absolute;left:318.00px;top:393.00px;width:1.15px;height:572.50px;background:#000;"></div>
<div style="position:absolute;left:561.00px;top:393.00px;width:1.15px;height:572.50px;background:#000;"></div>
<div style="position:absolute;left:707.00px;top:393.00px;width:1.15px;height:572.50px;background:#000;"></div>
<div style="position:absolute;left:799.00px;top:393.00px;width:1.15px;height:572.50px;background:#000;"></div>
<div style="position:absolute;left:706.00px;top:392.50px;width:95.00px;height:28.50px;box-sizing:border-box;border:2px solid #1e7145;"></div>
<div style="position:absolute;left:796.00px;top:416.50px;width:6.00px;height:6.00px;background:#1e7145;border:1px solid #fff;box-sizing:content-box;margin:-1px;"></div>
<div style="position:absolute;left:800.50px;top:397.00px;width:20.50px;height:20.50px;box-sizing:border-box;border:1px solid #c6c6c6;background:#fff;"></div>
<svg style="position:absolute;left:805.00px;top:404.00px;" width="11" height="7" viewBox="0 0 11 7"><path d="M1.5 1.5 H9.5 L5.5 5.5Z" fill="#6a6a6a"/></svg>
</div>
<div style="position:absolute;left:0.00px;top:953.00px;width:1918.00px;height:40.00px;background:#e4e9e6;"></div>
<div style="position:absolute;left:231.90px;top:953.00px;width:7.00px;height:7.00px;background:radial-gradient(circle at 0 100%, #e4e9e6 6.5px, #fff 7.2px);"></div>
<div style="position:absolute;left:347.80px;top:953.00px;width:7.00px;height:7.00px;background:radial-gradient(circle at 100% 100%, #e4e9e6 6.5px, #fff 7.2px);"></div>
<svg style="position:absolute;left:28.50px;top:965.00px;" width="11" height="14" viewBox="0 0 11 14"><path d="M8.5 1 L2.5 7 L8.5 13" fill="none" stroke="#a0a0a0" stroke-width="1.3"/></svg>
<svg style="position:absolute;left:69.50px;top:965.00px;" width="11" height="14" viewBox="0 0 11 14"><path d="M2.5 1 L8.5 7 L2.5 13" fill="none" stroke="#a0a0a0" stroke-width="1.3"/></svg>
<div class="t" style="left:152.50px;top:967.00px;font-size:17.80px;color:#3a3a3a;letter-spacing:-0.724px;">FOrçado</div>
<div style="position:absolute;left:233.00px;top:961.00px;width:1.00px;height:24.00px;background:#c8c8c8;"></div>
<div style="position:absolute;left:238.80px;top:952.00px;width:109.20px;height:36.00px;border-radius:0 0 7px 7px;background:#fff;"></div>
<div class="t" style="left:249.80px;top:961.00px;font-size:18.00px;color:#242424;font-weight:bold;letter-spacing:-0.827px;">FRealizado</div>
<div style="position:absolute;left:249.20px;top:982.80px;width:88.80px;height:2.20px;background:#107c41;"></div>
<div style="position:absolute;left:353.00px;top:961.00px;width:1.00px;height:24.00px;background:#c8c8c8;"></div>
<div class="t" style="left:373.50px;top:966.00px;font-size:17.80px;color:#3a3a3a;letter-spacing:-0.181px;">DDepartamento</div>
<div style="position:absolute;left:515.50px;top:961.00px;width:1.00px;height:24.00px;background:#c8c8c8;"></div>
<svg style="position:absolute;left:568.50px;top:964.50px;" width="16" height="16" viewBox="0 0 16 16"><path d="M8 1 V15 M1 8 H15" stroke="#3a3a3a" stroke-width="1.4"/></svg>
<div style="position:absolute;left:1152.50px;top:966.80px;width:3.00px;height:3.00px;background:#3a3a3a;"></div>
<div style="position:absolute;left:1152.50px;top:971.80px;width:3.00px;height:3.00px;background:#3a3a3a;"></div>
<div style="position:absolute;left:1152.50px;top:976.80px;width:3.00px;height:3.00px;background:#3a3a3a;"></div>
<div style="position:absolute;left:1174.20px;top:962.00px;width:720.60px;height:21.00px;border-radius:10.5px;background:#f4f4f4;"></div>
<svg style="position:absolute;left:1179.50px;top:966.50px;" width="10" height="12" viewBox="0 0 10 12"><path d="M9 1 L1.5 6 L9 11Z" fill="#6e6e6e" stroke="#6e6e6e" stroke-width="1" stroke-linejoin="round"/></svg>
<div style="position:absolute;left:1195.00px;top:967.00px;width:668.00px;height:11.00px;border-radius:5.5px;background:#707070;"></div>
<svg style="position:absolute;left:1880.00px;top:966.50px;" width="10" height="12" viewBox="0 0 10 12"><path d="M1 1 L8.5 6 L1 11Z" fill="#6e6e6e" stroke="#6e6e6e" stroke-width="1" stroke-linejoin="round"/></svg>
<div style="position:absolute;left:0.00px;top:993.00px;width:1918.00px;height:27.00px;background:#f4f4f4;"></div>
<div style="position:absolute;left:0.00px;top:1020.00px;width:1918.00px;height:1.00px;background:#262626;"></div>
<div class="t" style="left:12.50px;top:1002.00px;font-size:12.87px;color:#242424;">Pronto</div>
<svg style="position:absolute;left:76.50px;top:999.00px;" width="20" height="18" viewBox="0 0 20 18"><path d="M1 2.5 H18" stroke="#3a3a3a" stroke-width="1.3"/><rect x="1" y="1" width="18" height="14" fill="none" stroke="#3a3a3a" stroke-width="1.2"/><path d="M3 7 H7 M3 10 H6 M3 13 H6" stroke="#3a3a3a" stroke-width="1.1"/><circle cx="13" cy="11.5" r="4.5" fill="#fff" stroke="#3a3a3a" stroke-width="1.3"/><circle cx="13" cy="11.5" r="2" fill="#3a3a3a"/></svg>
<svg style="position:absolute;left:116.50px;top:998.00px;" width="20" height="19" viewBox="0 0 20 19"><circle cx="8.1" cy="3" r="2" fill="none" stroke="#2a2a2a" stroke-width="1.3"/><path d="M1.2 4.3 Q0.4 6.8 3.5 6.6 Q5.5 6.2 6.6 6.7 Q7.2 10 6.2 13 Q5.2 15.5 5.6 16.6 Q6.4 17.6 7.6 16.8" fill="none" stroke="#2a2a2a" stroke-width="1.3" stroke-linecap="round"/><path d="M15.6 4.5 Q16.4 7 13.4 7.1 Q11.3 7.3 11 8.6 V10.6" fill="none" stroke="#2a2a2a" stroke-width="1.3" stroke-linecap="round"/><path d="M9.2 13.2 L12.8 17 L19 10.4" fill="none" stroke="#2a2a2a" stroke-width="1.3"/></svg>
<div class="t" style="left:139.20px;top:1001.00px;font-size:13.18px;color:#3a3a3a;">Acessibilidade: tudo certo</div>
<svg style="position:absolute;left:1378.00px;top:998.50px;" width="20" height="18" viewBox="0 0 20 18"><path d="M5 12.5 H1 V1 H18 V6" fill="none" stroke="#3a3a3a" stroke-width="1.2"/><circle cx="12" cy="12" r="3.8" fill="none" stroke="#3a3a3a" stroke-width="2.2" stroke-dasharray="1.5 1.2"/><circle cx="12" cy="12" r="1.3" fill="#3a3a3a"/></svg>
<div class="t" style="left:1400.00px;top:1002.00px;font-size:12.96px;color:#242424;">Exibir Configurações</div>
<div style="position:absolute;left:1545.00px;top:994.00px;width:49.70px;height:25.50px;background:#dedede;"></div>
<svg style="position:absolute;left:1560.00px;top:997.50px;" width="19" height="18" viewBox="0 0 19 18"><rect x="1.6" y="1.3" width="15.6" height="15.6" rx="0.8" fill="none" stroke="#3a3a3a" stroke-width="1.5"/><path d="M6.8 1.3 V16.9 M12 1.3 V16.9 M1.6 6.5 H17.2 M1.6 11.7 H17.2" stroke="#3a3a3a" stroke-width="1.4"/></svg>
<svg style="position:absolute;left:1610.50px;top:997.50px;" width="19" height="18" viewBox="0 0 19 18"><rect x="1.2" y="1.2" width="16.5" height="15.6" rx="0.8" fill="none" stroke="#3a3a3a" stroke-width="1.5"/><rect x="5.2" y="4.2" width="8.6" height="9.8" fill="#d8d8d8" stroke="#2a2a2a" stroke-width="1.4"/><path d="M7 6.8 H12 M7 9.1 H12 M7 11.4 H12" stroke="#3a3a3a" stroke-width="1"/></svg>
<svg style="position:absolute;left:1660.50px;top:997.50px;" width="19" height="18" viewBox="0 0 19 18"><rect x="1.2" y="1.2" width="16.5" height="15.6" rx="0.8" fill="none" stroke="#3a3a3a" stroke-width="1.5"/><path d="M5.3 1.2 V10.1 M1.2 10.1 H11 V1.2" fill="none" stroke="#3a3a3a" stroke-width="1.3"/><path d="M8 1.2 V10" stroke="#3a3a3a" stroke-width="1.2"/></svg>
<div style="position:absolute;left:1702.00px;top:1006.00px;width:9.70px;height:1.30px;background:#3a3a3a;"></div>
<div style="position:absolute;left:1718.00px;top:1006.50px;width:125.00px;height:1.00px;background:#6a6a6a;"></div>
<div style="position:absolute;left:1777.80px;top:1000.00px;width:6.20px;height:13.80px;background:#6a6a6a;border-radius:0.5px;"></div>
<svg style="position:absolute;left:1848.50px;top:1002.00px;" width="11" height="11" viewBox="0 0 11 11"><path d="M5.5 0.5 V10.5 M0.5 5.5 H10.5" stroke="#3a3a3a" stroke-width="1.3"/></svg>
<div class="t" style="left:1876.00px;top:1003.00px;font-size:11.84px;color:#3a3a3a;">100%</div>
<div style="position:absolute;left:1894.80px;top:270.00px;width:21.20px;height:686.00px;border-radius:10.5px;background:#f3f3f3;"></div>
<svg style="position:absolute;left:1899.50px;top:275.50px;" width="12" height="10" viewBox="0 0 12 10"><path d="M1 9 L6 1.5 L11 9Z" fill="#6e6e6e" stroke="#6e6e6e" stroke-width="1" stroke-linejoin="round"/></svg>
<div style="position:absolute;left:1900.00px;top:288.80px;width:11.00px;height:152.80px;border-radius:5.5px;background:#707070;"></div>
<svg style="position:absolute;left:1899.50px;top:940.50px;" width="12" height="10" viewBox="0 0 12 10"><path d="M1 1 L6 8.5 L11 1Z" fill="#6e6e6e" stroke="#6e6e6e" stroke-width="1" stroke-linejoin="round"/></svg>
</body></html>
